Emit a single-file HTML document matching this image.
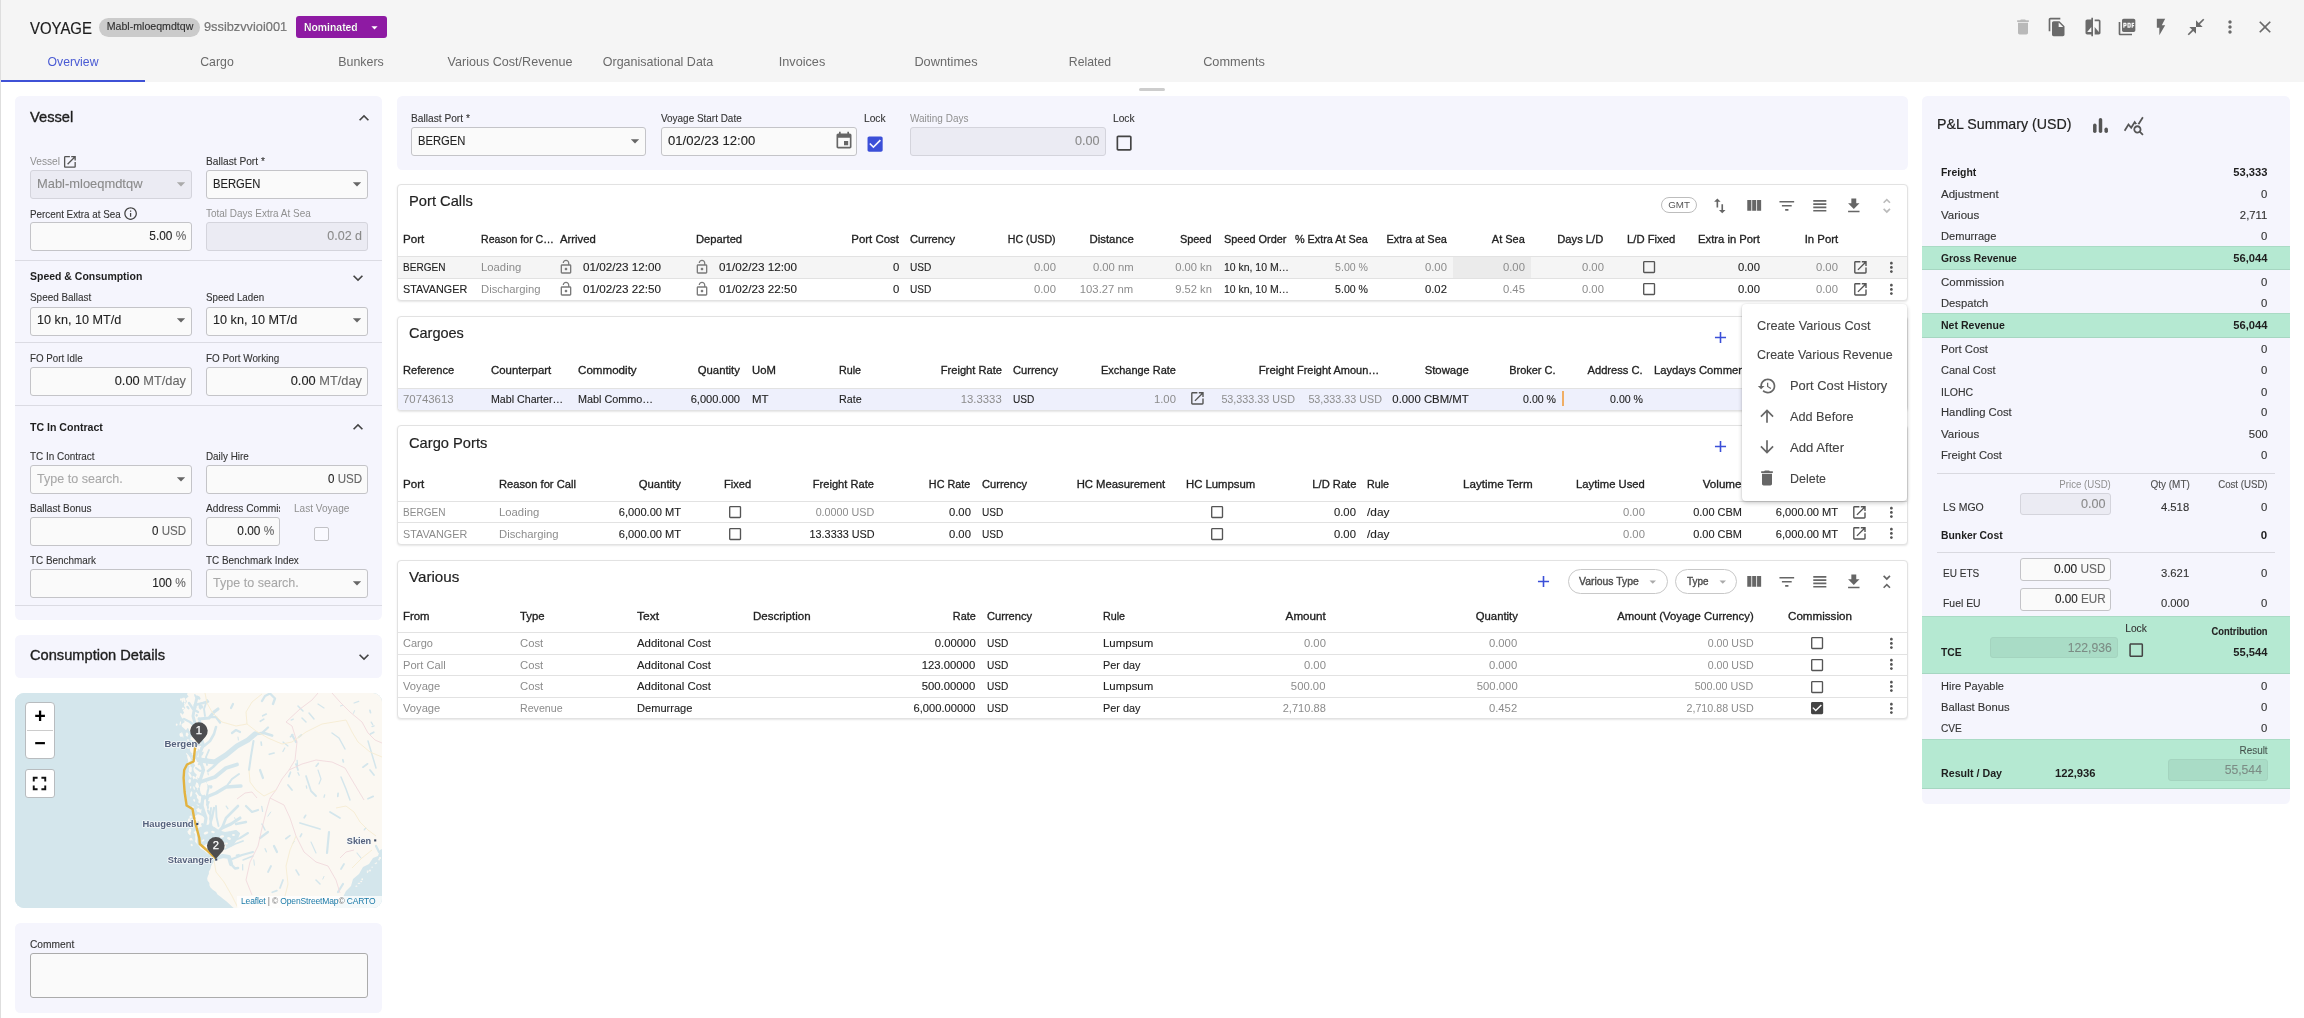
<!DOCTYPE html>
<html lang="en"><head><meta charset="utf-8"><title>Voyage</title>
<style>
html,body{margin:0;padding:0;background:#fff;}
body{width:2304px;height:1018px;overflow:hidden;font-family:"Liberation Sans",sans-serif;color:#222;}
#root{position:relative;width:2304px;height:1018px;overflow:hidden;background:#fff;}
.b,.t,.i,.in,.card,.chip{position:absolute;box-sizing:border-box;}
.t{white-space:nowrap;line-height:20px;height:20px;}
.i{display:block;}
/* text classes */
.c{font-size:11.25px;color:#222;-webkit-text-stroke:.12px #222;}
.g{color:#8c8c8c;-webkit-text-stroke:0;}
.h{font-size:11.25px;color:#222;-webkit-text-stroke:.32px #222;}
.l{font-size:10.1px;color:#333;-webkit-text-stroke:.1px #333;}
.lg{color:#909090;-webkit-text-stroke:0;}
.hd{font-size:14.8px;color:#222;-webkit-text-stroke:.18px #222;}
.hdb{font-size:14.4px;color:#1e1e1e;-webkit-text-stroke:.36px #1e1e1e;}
.sh{font-size:11.25px;color:#1e1e1e;font-weight:bold;}
.tab{font-size:12.6px;color:#6a6a6a;}
.p{font-size:11.25px;color:#333;-webkit-text-stroke:.12px #333;}
.pb{font-size:11.25px;color:#1e1e1e;font-weight:bold;}
.m{font-size:12.8px;color:#444;-webkit-text-stroke:.1px #444;}
/* inputs */
.in{border:1px solid #c4c4c8;border-radius:3px;background:#fafafa;display:flex;align-items:center;padding:0 5px 1.6px 6px;font-size:12.4px;color:#222;overflow:hidden;white-space:nowrap;}
.in.sm{padding-bottom:0;}
.in.cm{border-color:#ababab;}
.in.dis{background:#ebebf3;color:#8a8a8a;border-color:#d4d4dc;}
.in .iv{display:block;-webkit-text-stroke:.1px currentColor;}
.in .ph{color:#a8a8a8;}
.in .sf{color:#666;}
.in.dis .sf{color:#8a8a8a;}
.in .dd{margin-left:auto;flex:none;margin-right:-5px;}
.card{background:#fff;border:1px solid #e2e2e2;border-radius:4px;box-shadow:0 1px 2px rgba(0,0,0,.10);}
.panel{background:#f5f5fd;border-radius:5.4px;}
.chip{border:1px solid #c8c8c8;border-radius:14px;background:#fff;display:flex;align-items:center;font-size:11px;color:#444;}

.ov{position:absolute;left:0;top:0;width:2304px;height:1018px;will-change:transform;pointer-events:none;}
.ml{position:absolute;left:0;top:0;width:2304px;height:1018px;}
.in.tx{background:none!important;border-color:transparent!important;}
.in span.dd{display:block;}

</style></head>
<body>
<div id="root">
<div class="b" style="left:0px;top:0px;width:2304px;height:82px;background:#f5f5f5"></div>
<div class="b" style="left:0px;top:0px;width:1px;height:1018px;background:#dedede"></div>
<div class="b" style="left:99px;top:18px;width:101px;height:19px;border-radius:10px;background:#cbcbcb"></div>
<div class="b" style="left:296px;top:16px;width:91px;height:22px;border-radius:3px;background:#8e1aa3"></div>
<svg class="i" style="left:367px;top:19.5px" width="15" height="15" viewBox="0 0 24 24" fill="#fff"><path d="M7 10l5 5 5-5z"/></svg>
<div class="b" style="left:1px;top:79.5px;width:144px;height:2.5px;background:#3f51d6"></div>
<svg class="i" style="left:2013.3px;top:17.1px" width="20" height="20" viewBox="0 0 24 24" fill="#b9b9b9"><path d="M6 19c0 1.1.9 2 2 2h8c1.1 0 2-.9 2-2V7H6v12zM19 4h-3.5l-1-1h-5l-1 1H5v2h14V4z"/></svg>
<svg class="i" style="left:2047.2px;top:17.1px" width="20" height="20" viewBox="0 0 24 24" fill="#6a6a6a"><path d="M16 1H4c-1.1 0-2 .9-2 2v14h2V3h12V1zm-1 4l6 6v10c0 1.1-.9 2-2 2H7.99C6.89 23 6 22.1 6 21l.01-14c0-1.1.89-2 1.99-2h7zm-1 7h5.5L14 6.5V12z"/></svg>
<svg class="i" style="left:2082.6px;top:17.1px" width="20" height="20" viewBox="0 0 24 24" fill="#6a6a6a"><path d="M10 3H5c-1.1 0-2 .9-2 2v14c0 1.1.9 2 2 2h5v2h2V1h-2v2zm0 15H5l5-6v6zm9-15h-5v2h5v13l-5-6v9h5c1.1 0 2-.9 2-2V5c0-1.1-.9-2-2-2z"/></svg>
<svg class="i" style="left:2117px;top:17.1px" width="20" height="20" viewBox="0 0 24 24" fill="#6a6a6a"><path d="M20 2H8c-1.1 0-2 .9-2 2v12c0 1.1.9 2 2 2h12c1.1 0 2-.9 2-2V4c0-1.1-.9-2-2-2zm-8.5 7.5c0 .83-.67 1.5-1.5 1.5H9v2H7.5V7H10c.83 0 1.5.67 1.5 1.5v1zm5 2c0 .83-.67 1.5-1.5 1.5h-2.5V7H15c.83 0 1.5.67 1.5 1.5v3zm4-3H19v1h1.5V11H19v2h-1.5V7h3v1.5zM9 9.5h1v-1H9v1zM4 6H2v14c0 1.1.9 2 2 2h14v-2H4V6zm10 5.5h1v-3h-1v3z"/></svg>
<svg class="i" style="left:2150.6px;top:17.1px" width="20" height="20" viewBox="0 0 24 24" fill="#6a6a6a"><path d="M7 2v11h3v9l7-12h-4l4-8z"/></svg>
<svg class="i" style="left:2186px;top:17.1px" width="20" height="20" viewBox="0 0 24 24" fill="#6a6a6a"><path d="M22 3.41L16.71 8.7 20 12h-8V4l3.29 3.29L20.59 2 22 3.41zM3.41 22l5.29-5.29L12 20v-8H4l3.29 3.29L2 20.59 3.41 22z"/></svg>
<svg class="i" style="left:2220px;top:17.1px" width="20" height="20" viewBox="0 0 24 24" fill="#6a6a6a"><path d="M12 8c1.1 0 2-.9 2-2s-.9-2-2-2-2 .9-2 2 .9 2 2 2zm0 2c-1.1 0-2 .9-2 2s.9 2 2 2 2-.9 2-2-.9-2-2-2zm0 6c-1.1 0-2 .9-2 2s.9 2 2 2 2-.9 2-2-.9-2-2-2z"/></svg>
<svg class="i" style="left:2255.2px;top:17.1px" width="20" height="20" viewBox="0 0 24 24" fill="#6a6a6a"><path d="M19 6.41L17.59 5 12 10.59 6.41 5 5 6.41 10.59 12 5 17.59 6.41 19 12 13.41 17.59 19 19 17.59 13.41 12z"/></svg>
<div class="b" style="left:1139px;top:87.5px;width:26px;height:3px;background:#cdcdcd;border-radius:2px"></div>
<div class="b panel" style="left:15.4px;top:96px;width:367px;height:524px;"></div>
<svg class="i" style="left:354px;top:107.5px" width="20" height="20" viewBox="0 0 24 24" fill="#444"><path d="M12 8l-6 6 1.41 1.41L12 10.83l4.59 4.58L18 14z"/></svg>
<svg class="i" style="left:62px;top:153.7px" width="15.8" height="15.8" viewBox="0 0 24 24" fill="#555"><path d="M19 19H5V5h7V3H5c-1.11 0-2 .9-2 2v14c0 1.1.89 2 2 2h14c1.1 0 2-.9 2-2v-7h-2v7zM14 3v2h3.59l-9.83 9.83 1.41 1.41L19 6.41V10h2V3h-7z"/></svg>
<div class="in dis" style="left:30px;top:170px;width:162px;height:29px;font-size:12.6px"><svg class="dd" width="20" height="20" viewBox="0 0 24 24" fill="#aaa"><path d="M7 10l5 5 5-5z"/></svg></div>
<div class="in" style="left:206px;top:170px;width:162px;height:29px;font-size:12.6px"><svg class="dd" width="20" height="20" viewBox="0 0 24 24" fill="#666"><path d="M7 10l5 5 5-5z"/></svg></div>
<svg class="i" style="left:122.9px;top:206.4px" width="15.2" height="15.2" viewBox="0 0 24 24" fill="#444"><path d="M11 7h2v2h-2zm0 4h2v6h-2zm1-9C6.48 2 2 6.48 2 12s4.48 10 10 10 10-4.48 10-10S17.52 2 12 2zm0 18c-4.41 0-8-3.59-8-8s3.59-8 8-8 8 3.59 8 8-3.59 8-8 8z"/></svg>
<div class="in" style="left:30px;top:222px;width:162px;height:29px;font-size:12.6px"></div>
<div class="in dis" style="left:206px;top:222px;width:162px;height:29px;font-size:12.6px"></div>
<div class="b" style="left:15.4px;top:260px;width:367px;height:1px;background:#dbdbe3"></div>
<svg class="i" style="left:347.5px;top:267.5px" width="20" height="20" viewBox="0 0 24 24" fill="#444"><path d="M16.59 8.59L12 13.17 7.41 8.59 6 10l6 6 6-6z"/></svg>
<div class="in" style="left:30px;top:307px;width:162px;height:28.5px;font-size:12.6px"><svg class="dd" width="20" height="20" viewBox="0 0 24 24" fill="#666"><path d="M7 10l5 5 5-5z"/></svg></div>
<div class="in" style="left:206px;top:307px;width:162px;height:28.5px;font-size:12.6px"><svg class="dd" width="20" height="20" viewBox="0 0 24 24" fill="#666"><path d="M7 10l5 5 5-5z"/></svg></div>
<div class="b" style="left:15.4px;top:342px;width:367px;height:1px;background:#dbdbe3"></div>
<div class="in" style="left:30px;top:367px;width:162px;height:29px;font-size:12.6px"></div>
<div class="in" style="left:206px;top:367px;width:162px;height:29px;font-size:12.6px"></div>
<div class="b" style="left:15.4px;top:404.5px;width:367px;height:1px;background:#dbdbe3"></div>
<svg class="i" style="left:347.5px;top:417px" width="20" height="20" viewBox="0 0 24 24" fill="#444"><path d="M12 8l-6 6 1.41 1.41L12 10.83l4.59 4.58L18 14z"/></svg>
<div class="in" style="left:30px;top:465px;width:162px;height:29px;font-size:12.6px"><svg class="dd" width="20" height="20" viewBox="0 0 24 24" fill="#666"><path d="M7 10l5 5 5-5z"/></svg></div>
<div class="in" style="left:206px;top:465px;width:162px;height:29px;font-size:12.6px"></div>
<div class="in" style="left:30px;top:517px;width:162px;height:29px;font-size:12.6px"></div>
<div class="in" style="left:206px;top:517px;width:74px;height:29px;font-size:12.6px"></div>
<div class="b" style="left:314.3px;top:527px;width:14.4px;height:14px;border:1.6px solid #c2c2c6;border-radius:2px;background:#fafaff"></div>
<div class="in" style="left:30px;top:569px;width:162px;height:29px;font-size:12.6px"></div>
<div class="in" style="left:206px;top:569px;width:162px;height:29px;font-size:12.6px"><svg class="dd" width="20" height="20" viewBox="0 0 24 24" fill="#666"><path d="M7 10l5 5 5-5z"/></svg></div>
<div class="b" style="left:15.4px;top:605px;width:367px;height:1px;background:#dbdbe3"></div>
<div class="b panel" style="left:15.4px;top:635px;width:367px;height:43px;"></div>
<svg class="i" style="left:354px;top:646.5px" width="20" height="20" viewBox="0 0 24 24" fill="#444"><path d="M16.59 8.59L12 13.17 7.41 8.59 6 10l6 6 6-6z"/></svg>
<div class="b" style="left:15px;top:693px;width:367.4px;height:215px;border-radius:9px;overflow:hidden;background:#d4e6ec"><svg width="368" height="215" viewBox="15 693 368 215" style="display:block">
<rect x="15" y="693" width="368" height="215" fill="#d4e6ec"/>
<path d="M188.2 692.0 L186.9 694.3 L188.6 696.6 L185.5 698.9 L187.0 701.2 L185.8 703.5 L183.9 705.8 L185.4 708.1 L182.9 710.4 L184.2 712.7 L182.1 715.0 L182.0 717.3 L183.2 719.6 L184.8 721.9 L181.5 724.2 L181.9 726.5 L184.5 728.8 L186.7 731.1 L185.8 733.4 L185.8 735.7 L189.1 738.0 L186.4 740.3 L191.5 742.6 L190.4 744.9 L190.3 747.2 L189.9 749.5 L190.5 751.8 L192.5 754.1 L190.2 756.4 L192.8 758.7 L194.0 761.0 L193.8 763.3 L195.3 765.6 L193.4 767.9 L193.6 770.2 L194.5 772.5 L196.8 774.8 L195.7 777.1 L195.2 779.4 L196.4 781.7 L195.8 784.0 L195.1 786.3 L197.3 788.6 L197.0 790.9 L195.2 793.2 L196.9 795.5 L196.9 797.8 L198.7 800.1 L198.2 802.4 L196.5 804.7 L199.8 807.0 L196.2 809.3 L197.2 811.6 L198.2 813.9 L194.9 816.2 L195.8 818.5 L193.4 820.8 L196.0 823.1 L196.2 825.4 L195.2 827.7 L196.4 830.0 L193.7 832.3 L195.5 834.6 L195.2 836.9 L195.4 839.2 L195.0 841.5 L196.9 843.8 L199.1 846.1 L200.5 848.4 L204.3 850.7 L206.9 853.0 L211.2 855.3 L213.0 857.6 L214.6 859.9 L213.5 862.2 L211.7 864.5 L210.9 866.8 L210.4 869.1 L208.9 871.4 L208.9 873.7 L207.9 876.0 L207.2 878.3 L207.5 880.6 L209.4 882.9 L209.4 885.2 L210.5 887.5 L212.8 889.8 L216.1 892.1 L217.5 894.4 L220.6 896.7 L223.3 899.0 L226.3 901.3 L228.8 903.6 L231.4 905.9 L234.0 908.2 L330.0 910.0 L337.0 903.0 L343.0 897.0 L346.0 891.0 L351.0 886.0 L353.0 879.0 L359.0 874.0 L363.0 867.0 L369.0 864.0 L373.0 858.0 L378.0 856.0 L380.0 850.0 L384.0 848.0 L384.0 692.0Z" fill="#fbf8f2"/>
<ellipse cx="189.0" cy="758.3" rx="1.4" ry="3.1" transform="rotate(-25 189.0 758.3)" fill="#fbf8f2"/>
<ellipse cx="183.1" cy="708.4" rx="1.2" ry="1.0" transform="rotate(10 183.1 708.4)" fill="#fbf8f2"/>
<ellipse cx="180.3" cy="723.4" rx="0.6" ry="2.2" transform="rotate(10 180.3 723.4)" fill="#fbf8f2"/>
<ellipse cx="189.7" cy="781.0" rx="1.2" ry="2.1" transform="rotate(10 189.7 781.0)" fill="#fbf8f2"/>
<ellipse cx="191.2" cy="794.2" rx="1.0" ry="2.9" transform="rotate(10 191.2 794.2)" fill="#fbf8f2"/>
<ellipse cx="187.5" cy="754.9" rx="0.6" ry="2.4" transform="rotate(-35 187.5 754.9)" fill="#fbf8f2"/>
<ellipse cx="176.7" cy="724.6" rx="0.9" ry="1.2" transform="rotate(10 176.7 724.6)" fill="#fbf8f2"/>
<ellipse cx="184.8" cy="703.9" rx="0.7" ry="1.2" transform="rotate(-15 184.8 703.9)" fill="#fbf8f2"/>
<ellipse cx="194.1" cy="788.1" rx="0.7" ry="1.8" transform="rotate(-15 194.1 788.1)" fill="#fbf8f2"/>
<ellipse cx="190.5" cy="839.3" rx="1.0" ry="1.3" transform="rotate(0 190.5 839.3)" fill="#fbf8f2"/>
<ellipse cx="191.7" cy="845.0" rx="1.0" ry="1.2" transform="rotate(-35 191.7 845.0)" fill="#fbf8f2"/>
<ellipse cx="192.6" cy="808.5" rx="1.0" ry="2.5" transform="rotate(10 192.6 808.5)" fill="#fbf8f2"/>
<ellipse cx="181.0" cy="699.5" rx="1.0" ry="1.3" transform="rotate(10 181.0 699.5)" fill="#fbf8f2"/>
<ellipse cx="189.2" cy="833.1" rx="0.8" ry="2.4" transform="rotate(-35 189.2 833.1)" fill="#fbf8f2"/>
<ellipse cx="194.2" cy="800.4" rx="0.9" ry="1.4" transform="rotate(-25 194.2 800.4)" fill="#fbf8f2"/>
<ellipse cx="190.6" cy="775.9" rx="0.8" ry="1.5" transform="rotate(-25 190.6 775.9)" fill="#fbf8f2"/>
<ellipse cx="190.7" cy="816.9" rx="1.2" ry="1.5" transform="rotate(10 190.7 816.9)" fill="#fbf8f2"/>
<ellipse cx="190.3" cy="769.9" rx="1.5" ry="2.7" transform="rotate(0 190.3 769.9)" fill="#fbf8f2"/>
<ellipse cx="181.0" cy="734.9" rx="1.5" ry="2.0" transform="rotate(-15 181.0 734.9)" fill="#fbf8f2"/>
<ellipse cx="191.7" cy="839.3" rx="0.7" ry="1.5" transform="rotate(-25 191.7 839.3)" fill="#fbf8f2"/>
<ellipse cx="188.0" cy="746.7" rx="1.5" ry="2.3" transform="rotate(-35 188.0 746.7)" fill="#fbf8f2"/>
<ellipse cx="190.5" cy="767.9" rx="1.3" ry="1.2" transform="rotate(-35 190.5 767.9)" fill="#fbf8f2"/>
<ellipse cx="189.1" cy="832.5" rx="1.3" ry="2.1" transform="rotate(-25 189.1 832.5)" fill="#fbf8f2"/>
<ellipse cx="188.8" cy="761.1" rx="0.6" ry="3.1" transform="rotate(0 188.8 761.1)" fill="#fbf8f2"/>
<ellipse cx="189.8" cy="765.5" rx="0.6" ry="1.3" transform="rotate(-25 189.8 765.5)" fill="#fbf8f2"/>
<ellipse cx="182.7" cy="700.1" rx="1.0" ry="2.4" transform="rotate(10 182.7 700.1)" fill="#fbf8f2"/>
<ellipse cx="189.1" cy="820.0" rx="1.2" ry="1.8" transform="rotate(10 189.1 820.0)" fill="#fbf8f2"/>
<ellipse cx="194.4" cy="778.2" rx="1.3" ry="2.6" transform="rotate(-35 194.4 778.2)" fill="#fbf8f2"/>
<ellipse cx="189.8" cy="775.0" rx="0.9" ry="2.9" transform="rotate(-25 189.8 775.0)" fill="#fbf8f2"/>
<ellipse cx="184.5" cy="700.2" rx="1.0" ry="2.7" transform="rotate(-15 184.5 700.2)" fill="#fbf8f2"/>
<ellipse cx="182.4" cy="734.9" rx="0.6" ry="3.0" transform="rotate(-15 182.4 734.9)" fill="#fbf8f2"/>
<ellipse cx="189.9" cy="830.7" rx="1.3" ry="2.1" transform="rotate(10 189.9 830.7)" fill="#fbf8f2"/>
<ellipse cx="181.7" cy="715.6" rx="1.0" ry="2.9" transform="rotate(-25 181.7 715.6)" fill="#fbf8f2"/>
<ellipse cx="190.6" cy="787.3" rx="0.6" ry="1.3" transform="rotate(10 190.6 787.3)" fill="#fbf8f2"/>
<ellipse cx="206.2" cy="790.3" rx="0.9" ry="2.3" transform="rotate(15 206.2 790.3)" fill="#d4e6ec"/>
<ellipse cx="206.0" cy="758.7" rx="1.4" ry="1.3" transform="rotate(-25 206.0 758.7)" fill="#d4e6ec"/>
<ellipse cx="198.5" cy="732.0" rx="1.1" ry="2.4" transform="rotate(-40 198.5 732.0)" fill="#d4e6ec"/>
<ellipse cx="202.1" cy="753.6" rx="1.1" ry="2.3" transform="rotate(30 202.1 753.6)" fill="#d4e6ec"/>
<ellipse cx="194.4" cy="732.0" rx="1.3" ry="2.3" transform="rotate(-25 194.4 732.0)" fill="#d4e6ec"/>
<ellipse cx="211.1" cy="786.9" rx="1.4" ry="1.8" transform="rotate(15 211.1 786.9)" fill="#d4e6ec"/>
<ellipse cx="202.1" cy="812.1" rx="1.0" ry="2.1" transform="rotate(0 202.1 812.1)" fill="#d4e6ec"/>
<ellipse cx="193.8" cy="753.5" rx="0.8" ry="1.4" transform="rotate(30 193.8 753.5)" fill="#d4e6ec"/>
<ellipse cx="189.5" cy="735.4" rx="1.3" ry="3.3" transform="rotate(30 189.5 735.4)" fill="#d4e6ec"/>
<ellipse cx="199.7" cy="781.8" rx="1.4" ry="3.3" transform="rotate(-25 199.7 781.8)" fill="#d4e6ec"/>
<ellipse cx="199.3" cy="793.1" rx="1.4" ry="1.6" transform="rotate(30 199.3 793.1)" fill="#d4e6ec"/>
<ellipse cx="201.4" cy="804.2" rx="1.0" ry="2.3" transform="rotate(-10 201.4 804.2)" fill="#d4e6ec"/>
<ellipse cx="198.5" cy="750.8" rx="0.7" ry="2.0" transform="rotate(-10 198.5 750.8)" fill="#d4e6ec"/>
<ellipse cx="203.6" cy="768.0" rx="0.6" ry="1.9" transform="rotate(15 203.6 768.0)" fill="#d4e6ec"/>
<ellipse cx="202.2" cy="734.4" rx="0.7" ry="3.2" transform="rotate(-25 202.2 734.4)" fill="#d4e6ec"/>
<ellipse cx="198.4" cy="822.3" rx="0.8" ry="1.3" transform="rotate(-25 198.4 822.3)" fill="#d4e6ec"/>
<ellipse cx="188.2" cy="731.2" rx="1.0" ry="3.2" transform="rotate(-10 188.2 731.2)" fill="#d4e6ec"/>
<ellipse cx="201.5" cy="748.8" rx="1.1" ry="2.3" transform="rotate(-10 201.5 748.8)" fill="#d4e6ec"/>
<ellipse cx="187.9" cy="707.6" rx="1.2" ry="2.1" transform="rotate(-40 187.9 707.6)" fill="#d4e6ec"/>
<ellipse cx="186.4" cy="731.0" rx="0.7" ry="1.8" transform="rotate(15 186.4 731.0)" fill="#d4e6ec"/>
<ellipse cx="200.3" cy="807.3" rx="1.4" ry="2.2" transform="rotate(-10 200.3 807.3)" fill="#d4e6ec"/>
<ellipse cx="203.1" cy="825.3" rx="1.4" ry="2.6" transform="rotate(-40 203.1 825.3)" fill="#d4e6ec"/>
<ellipse cx="200.0" cy="764.5" rx="0.7" ry="1.6" transform="rotate(-40 200.0 764.5)" fill="#d4e6ec"/>
<ellipse cx="199.5" cy="719.5" rx="1.2" ry="2.4" transform="rotate(-25 199.5 719.5)" fill="#d4e6ec"/>
<ellipse cx="194.8" cy="733.7" rx="0.8" ry="2.0" transform="rotate(-40 194.8 733.7)" fill="#d4e6ec"/>
<ellipse cx="197.2" cy="825.3" rx="0.6" ry="2.3" transform="rotate(-25 197.2 825.3)" fill="#d4e6ec"/>
<ellipse cx="199.4" cy="762.9" rx="1.0" ry="2.6" transform="rotate(30 199.4 762.9)" fill="#d4e6ec"/>
<ellipse cx="200.5" cy="752.2" rx="1.4" ry="2.1" transform="rotate(15 200.5 752.2)" fill="#d4e6ec"/>
<ellipse cx="191.2" cy="736.0" rx="0.8" ry="1.6" transform="rotate(30 191.2 736.0)" fill="#d4e6ec"/>
<ellipse cx="199.7" cy="790.7" rx="1.5" ry="3.4" transform="rotate(-25 199.7 790.7)" fill="#d4e6ec"/>
<ellipse cx="198.8" cy="697.9" rx="1.4" ry="2.1" transform="rotate(-40 198.8 697.9)" fill="#d4e6ec"/>
<ellipse cx="200.1" cy="707.0" rx="1.4" ry="2.7" transform="rotate(-10 200.1 707.0)" fill="#d4e6ec"/>
<ellipse cx="208.1" cy="773.8" rx="0.6" ry="1.6" transform="rotate(-10 208.1 773.8)" fill="#d4e6ec"/>
<ellipse cx="196.7" cy="754.0" rx="1.5" ry="3.3" transform="rotate(15 196.7 754.0)" fill="#d4e6ec"/>
<ellipse cx="189.1" cy="738.1" rx="1.4" ry="1.7" transform="rotate(-25 189.1 738.1)" fill="#d4e6ec"/>
<ellipse cx="195.5" cy="696.1" rx="1.0" ry="2.3" transform="rotate(-25 195.5 696.1)" fill="#d4e6ec"/>
<ellipse cx="197.3" cy="728.3" rx="0.7" ry="3.0" transform="rotate(-25 197.3 728.3)" fill="#d4e6ec"/>
<ellipse cx="193.9" cy="747.9" rx="0.6" ry="1.9" transform="rotate(-25 193.9 747.9)" fill="#d4e6ec"/>
<ellipse cx="201.9" cy="707.0" rx="1.4" ry="1.5" transform="rotate(30 201.9 707.0)" fill="#d4e6ec"/>
<ellipse cx="207.5" cy="797.9" rx="1.3" ry="2.8" transform="rotate(0 207.5 797.9)" fill="#d4e6ec"/>
<ellipse cx="196.7" cy="715.4" rx="1.2" ry="1.3" transform="rotate(30 196.7 715.4)" fill="#d4e6ec"/>
<ellipse cx="208.7" cy="812.0" rx="1.3" ry="3.0" transform="rotate(-25 208.7 812.0)" fill="#d4e6ec"/>
<ellipse cx="210.1" cy="814.3" rx="1.1" ry="3.0" transform="rotate(-40 210.1 814.3)" fill="#d4e6ec"/>
<ellipse cx="207.9" cy="803.4" rx="1.4" ry="2.7" transform="rotate(30 207.9 803.4)" fill="#d4e6ec"/>
<ellipse cx="198.8" cy="779.6" rx="0.6" ry="2.6" transform="rotate(-40 198.8 779.6)" fill="#d4e6ec"/>
<ellipse cx="199.8" cy="745.0" rx="0.6" ry="1.2" transform="rotate(15 199.8 745.0)" fill="#d4e6ec"/>
<ellipse cx="205.1" cy="784.5" rx="0.6" ry="3.0" transform="rotate(30 205.1 784.5)" fill="#d4e6ec"/>
<ellipse cx="211.6" cy="817.2" rx="0.7" ry="2.4" transform="rotate(30 211.6 817.2)" fill="#d4e6ec"/>
<ellipse cx="201.6" cy="791.8" rx="0.7" ry="1.8" transform="rotate(30 201.6 791.8)" fill="#d4e6ec"/>
<ellipse cx="201.5" cy="794.3" rx="1.2" ry="2.2" transform="rotate(0 201.5 794.3)" fill="#d4e6ec"/>
<ellipse cx="201.4" cy="706.0" rx="0.9" ry="1.3" transform="rotate(30 201.4 706.0)" fill="#d4e6ec"/>
<ellipse cx="198.7" cy="779.6" rx="0.7" ry="1.8" transform="rotate(30 198.7 779.6)" fill="#d4e6ec"/>
<ellipse cx="207.1" cy="786.1" rx="0.7" ry="2.3" transform="rotate(0 207.1 786.1)" fill="#d4e6ec"/>
<ellipse cx="196.6" cy="730.9" rx="1.2" ry="2.7" transform="rotate(-10 196.6 730.9)" fill="#d4e6ec"/>
<ellipse cx="201.9" cy="788.2" rx="1.0" ry="2.9" transform="rotate(15 201.9 788.2)" fill="#d4e6ec"/>
<ellipse cx="200.0" cy="721.9" rx="1.4" ry="1.2" transform="rotate(0 200.0 721.9)" fill="#d4e6ec"/>
<ellipse cx="195.2" cy="705.9" rx="1.5" ry="3.4" transform="rotate(0 195.2 705.9)" fill="#d4e6ec"/>
<ellipse cx="199.4" cy="723.3" rx="0.8" ry="2.5" transform="rotate(-25 199.4 723.3)" fill="#d4e6ec"/>
<ellipse cx="201.9" cy="793.2" rx="0.9" ry="2.5" transform="rotate(30 201.9 793.2)" fill="#d4e6ec"/>
<ellipse cx="209.1" cy="762.1" rx="1.2" ry="1.7" transform="rotate(0 209.1 762.1)" fill="#d4e6ec"/>
<path d="M197.0 697.0 L194.5 708.0 L193.0 716.0 L196.0 727.0 L201.0 738.0 L203.5 745.0 L200.0 752.0 L200.0 760.0" fill="none" stroke="#d4e6ec" stroke-width="2.97" stroke-linecap="round" stroke-linejoin="round"/>
<path d="M200.0 760.0 L203.5 770.0 L199.5 782.0 L203.0 795.0 L202.0 806.0 L206.0 818.0 L204.0 830.0" fill="none" stroke="#d4e6ec" stroke-width="3.24" stroke-linecap="round" stroke-linejoin="round"/>
<path d="M189.0 703.0 L193.0 709.0 L198.0 712.0" fill="none" stroke="#d4e6ec" stroke-width="2.43" stroke-linecap="round" stroke-linejoin="round"/>
<path d="M184.0 719.0 L190.0 722.0 L196.0 727.0" fill="none" stroke="#d4e6ec" stroke-width="2.43" stroke-linecap="round" stroke-linejoin="round"/>
<path d="M186.0 731.0 L192.0 733.0 L198.0 731.0" fill="none" stroke="#d4e6ec" stroke-width="2.16" stroke-linecap="round" stroke-linejoin="round"/>
<path d="M190.0 741.0 L196.0 744.0 L203.0 745.0" fill="none" stroke="#d4e6ec" stroke-width="2.7" stroke-linecap="round" stroke-linejoin="round"/>
<path d="M191.0 756.0 L196.0 758.0 L200.0 760.0" fill="none" stroke="#d4e6ec" stroke-width="2.7" stroke-linecap="round" stroke-linejoin="round"/>
<path d="M196.0 768.0 L200.0 771.0 L204.0 770.0" fill="none" stroke="#d4e6ec" stroke-width="2.16" stroke-linecap="round" stroke-linejoin="round"/>
<path d="M195.0 780.0 L199.0 782.0" fill="none" stroke="#d4e6ec" stroke-width="2.97" stroke-linecap="round" stroke-linejoin="round"/>
<path d="M197.0 791.0 L200.0 795.0 L204.0 796.0" fill="none" stroke="#d4e6ec" stroke-width="2.16" stroke-linecap="round" stroke-linejoin="round"/>
<path d="M197.0 803.0 L202.0 806.0" fill="none" stroke="#d4e6ec" stroke-width="2.43" stroke-linecap="round" stroke-linejoin="round"/>
<path d="M198.0 813.0 L203.0 815.0 L206.0 818.0" fill="none" stroke="#d4e6ec" stroke-width="2.16" stroke-linecap="round" stroke-linejoin="round"/>
<path d="M207.0 700.0 L204.0 709.0 L205.0 716.0" fill="none" stroke="#d4e6ec" stroke-width="1.89" stroke-linecap="round" stroke-linejoin="round"/>
<path d="M209.0 750.0 L206.0 757.0 L207.0 765.0" fill="none" stroke="#d4e6ec" stroke-width="1.89" stroke-linecap="round" stroke-linejoin="round"/>
<path d="M209.0 786.0 L206.5 797.0 L208.0 808.0" fill="none" stroke="#d4e6ec" stroke-width="2.03" stroke-linecap="round" stroke-linejoin="round"/>
<path d="M211.0 808.0 L210.0 819.0 L212.0 828.0" fill="none" stroke="#d4e6ec" stroke-width="1.89" stroke-linecap="round" stroke-linejoin="round"/>
<path d="M216.0 806.0 L216.5 817.0 L218.5 826.0" fill="none" stroke="#d4e6ec" stroke-width="1.89" stroke-linecap="round" stroke-linejoin="round"/>
<ellipse cx="203.6" cy="788" rx="3.6" ry="7.2" transform="rotate(6 203.6 788)" fill="#fbf8f2"/>
<ellipse cx="361.2" cy="881.5" rx="1.0" ry="0.7" fill="#fbf8f2"/>
<ellipse cx="375.3" cy="863.5" rx="0.6" ry="0.7" fill="#fbf8f2"/>
<ellipse cx="359.0" cy="883.3" rx="1.3" ry="0.6" fill="#fbf8f2"/>
<ellipse cx="347.7" cy="898.2" rx="0.6" ry="0.7" fill="#fbf8f2"/>
<ellipse cx="380.0" cy="858.1" rx="1.1" ry="1.0" fill="#fbf8f2"/>
<ellipse cx="356.4" cy="886.2" rx="1.0" ry="0.6" fill="#fbf8f2"/>
<ellipse cx="385.2" cy="851.4" rx="1.1" ry="1.0" fill="#fbf8f2"/>
<ellipse cx="362.2" cy="879.3" rx="0.8" ry="1.0" fill="#fbf8f2"/>
<ellipse cx="367.8" cy="871.1" rx="1.2" ry="0.7" fill="#fbf8f2"/>
<ellipse cx="370.0" cy="870.5" rx="0.9" ry="1.0" fill="#fbf8f2"/>
<ellipse cx="367.5" cy="872.3" rx="0.7" ry="0.7" fill="#fbf8f2"/>
<ellipse cx="376.5" cy="863.0" rx="0.7" ry="0.8" fill="#fbf8f2"/>
<ellipse cx="372.1" cy="867.2" rx="0.6" ry="0.8" fill="#fbf8f2"/>
<ellipse cx="379.1" cy="859.6" rx="0.8" ry="1.0" fill="#fbf8f2"/>
<path d="M197.0 829.0 L203.0 826.5 L209.0 825.0 L214.0 827.5 L219.0 831.0 L225.0 832.5 L231.0 831.5 L236.0 830.5 L239.5 833.5 L237.5 838.0 L234.5 842.5 L231.0 846.0 L227.0 847.0 L224.5 842.0 L220.5 838.5 L216.0 837.0 L211.5 839.5 L207.0 843.0 L202.0 846.0 L198.0 844.0 L197.5 837.0Z" fill="#d4e6ec" stroke="#d4e6ec" stroke-width="1.2" stroke-linejoin="round"/>
<ellipse cx="206" cy="833" rx="2.4" ry="1.3" transform="rotate(-20 206 833)" fill="#fbf8f2"/>
<ellipse cx="213" cy="832" rx="1.8" ry="1.1" transform="rotate(10 213 832)" fill="#fbf8f2"/>
<ellipse cx="222" cy="836.5" rx="2.2" ry="1.2" transform="rotate(-15 222 836.5)" fill="#fbf8f2"/>
<ellipse cx="229" cy="838.5" rx="2.0" ry="1.3" transform="rotate(25 229 838.5)" fill="#fbf8f2"/>
<ellipse cx="233.5" cy="835" rx="1.5" ry="1.0" transform="rotate(0 233.5 835)" fill="#fbf8f2"/>
<ellipse cx="203" cy="840.5" rx="1.6" ry="1.0" transform="rotate(-30 203 840.5)" fill="#fbf8f2"/>
<ellipse cx="226.5" cy="843.5" rx="1.4" ry="0.9" transform="rotate(0 226.5 843.5)" fill="#fbf8f2"/>
<path d="M199.0 760.0 L215.0 762.0 L226.0 755.0 L237.0 746.0 L248.0 740.0 L255.0 734.0" fill="none" stroke="#d4e6ec" stroke-width="5.2" stroke-linecap="round" stroke-linejoin="round"/>
<path d="M255.0 734.0 L264.0 733.0 L272.0 735.5" fill="none" stroke="#d4e6ec" stroke-width="2.86" stroke-linecap="round" stroke-linejoin="round"/>
<path d="M262.0 733.0 L268.0 727.5" fill="none" stroke="#d4e6ec" stroke-width="2.34" stroke-linecap="round" stroke-linejoin="round"/>
<path d="M253.5 741.0 L251.0 756.0 L249.0 770.0" fill="none" stroke="#d4e6ec" stroke-width="2.08" stroke-linecap="round" stroke-linejoin="round"/>
<path d="M200.0 782.0 L215.0 777.0 L226.0 768.0 L237.0 764.5" fill="none" stroke="#d4e6ec" stroke-width="3.9" stroke-linecap="round" stroke-linejoin="round"/>
<path d="M204.0 798.0 L216.0 793.0 L226.0 787.0 L241.0 786.0" fill="none" stroke="#d4e6ec" stroke-width="3.38" stroke-linecap="round" stroke-linejoin="round"/>
<path d="M226.0 787.0 L232.0 779.0 L239.0 774.0" fill="none" stroke="#d4e6ec" stroke-width="2.08" stroke-linecap="round" stroke-linejoin="round"/>
<path d="M199.0 719.0 L209.0 718.0 L214.0 712.0 L218.0 709.0" fill="none" stroke="#d4e6ec" stroke-width="3.12" stroke-linecap="round" stroke-linejoin="round"/>
<path d="M211.0 717.0 L216.0 717.0 L220.0 722.5" fill="none" stroke="#d4e6ec" stroke-width="2.34" stroke-linecap="round" stroke-linejoin="round"/>
<path d="M195.0 705.0 L203.0 703.0 L208.0 701.5" fill="none" stroke="#d4e6ec" stroke-width="2.6" stroke-linecap="round" stroke-linejoin="round"/>
<path d="M262.0 701.0 L265.0 696.0 L270.0 693.5 L275.0 698.5 L273.0 704.0" fill="none" stroke="#d4e6ec" stroke-width="2.34" stroke-linecap="round" stroke-linejoin="round"/>
<path d="M204.0 746.0 L210.0 741.0 L214.0 734.0 L216.0 727.0" fill="none" stroke="#d4e6ec" stroke-width="2.6" stroke-linecap="round" stroke-linejoin="round"/>
<path d="M208.0 771.0 L213.0 767.0 L219.0 761.0" fill="none" stroke="#d4e6ec" stroke-width="2.6" stroke-linecap="round" stroke-linejoin="round"/>
<path d="M214.0 836.0 L222.0 828.0 L231.0 824.0 L240.0 818.0" fill="none" stroke="#d4e6ec" stroke-width="3.12" stroke-linecap="round" stroke-linejoin="round"/>
<path d="M222.0 828.0 L226.0 818.0 L232.0 812.0 L238.0 806.0" fill="none" stroke="#d4e6ec" stroke-width="2.6" stroke-linecap="round" stroke-linejoin="round"/>
<path d="M209.0 828.0 L212.0 818.0 L214.0 808.0" fill="none" stroke="#d4e6ec" stroke-width="2.34" stroke-linecap="round" stroke-linejoin="round"/>
<path d="M230.0 842.0 L240.0 838.0 L248.0 833.0" fill="none" stroke="#d4e6ec" stroke-width="2.08" stroke-linecap="round" stroke-linejoin="round"/>
<path d="M236.0 824.0 L246.0 822.0" fill="none" stroke="#d4e6ec" stroke-width="2.34" stroke-linecap="round" stroke-linejoin="round"/>
<path d="M216.0 858.0 L223.0 856.0 L229.0 857.0 L231.0 864.0" fill="none" stroke="#d4e6ec" stroke-width="4.16" stroke-linecap="round" stroke-linejoin="round"/>
<path d="M231.0 864.0 L235.0 868.5 L238.0 868.0" fill="none" stroke="#d4e6ec" stroke-width="2.6" stroke-linecap="round" stroke-linejoin="round"/>
<path d="M231.0 859.5 L242.0 855.0 L253.0 852.0" fill="none" stroke="#d4e6ec" stroke-width="2.08" stroke-linecap="round" stroke-linejoin="round"/>
<path d="M225.0 849.0 L235.0 844.0 L243.0 841.0" fill="none" stroke="#d4e6ec" stroke-width="1.82" stroke-linecap="round" stroke-linejoin="round"/>
<path d="M292.0 735.0 L296.0 742.0" fill="none" stroke="#d4e6ec" stroke-width="2.2" stroke-linecap="round" stroke-linejoin="round"/>
<path d="M298.0 706.0 L303.0 711.0" fill="none" stroke="#d4e6ec" stroke-width="1.5" stroke-linecap="round" stroke-linejoin="round"/>
<path d="M309.0 713.0 L314.0 719.0" fill="none" stroke="#d4e6ec" stroke-width="1.5" stroke-linecap="round" stroke-linejoin="round"/>
<path d="M302.0 718.0 L306.0 722.0" fill="none" stroke="#d4e6ec" stroke-width="1.5" stroke-linecap="round" stroke-linejoin="round"/>
<path d="M318.0 704.0 L324.0 708.0" fill="none" stroke="#d4e6ec" stroke-width="1.2" stroke-linecap="round" stroke-linejoin="round"/>
<path d="M332.0 733.0 L339.0 738.0 L345.0 749.0" fill="none" stroke="#d4e6ec" stroke-width="1.5" stroke-linecap="round" stroke-linejoin="round"/>
<path d="M296.0 764.0 L298.0 770.0" fill="none" stroke="#d4e6ec" stroke-width="1.8" stroke-linecap="round" stroke-linejoin="round"/>
<path d="M318.0 770.0 L321.0 779.0 L319.0 784.0" fill="none" stroke="#d4e6ec" stroke-width="1.2" stroke-linecap="round" stroke-linejoin="round"/>
<path d="M306.0 776.0 L311.0 791.0 L316.0 796.0" fill="none" stroke="#d4e6ec" stroke-width="1.8" stroke-linecap="round" stroke-linejoin="round"/>
<path d="M341.0 777.0 L346.0 789.0 L350.0 800.0" fill="none" stroke="#d4e6ec" stroke-width="1.5" stroke-linecap="round" stroke-linejoin="round"/>
<path d="M288.0 785.0 L292.0 790.0" fill="none" stroke="#d4e6ec" stroke-width="1.8" stroke-linecap="round" stroke-linejoin="round"/>
<path d="M370.0 770.0 L374.0 775.0" fill="none" stroke="#d4e6ec" stroke-width="1.8" stroke-linecap="round" stroke-linejoin="round"/>
<path d="M368.0 741.0 L376.0 768.0" fill="none" stroke="#d4e6ec" stroke-width="1.5" stroke-linecap="round" stroke-linejoin="round"/>
<path d="M283.0 742.0 L288.0 746.0" fill="none" stroke="#d4e6ec" stroke-width="1.2" stroke-linecap="round" stroke-linejoin="round"/>
<path d="M232.0 733.0 L236.0 730.0 L240.0 732.0" fill="none" stroke="#d4e6ec" stroke-width="2.2" stroke-linecap="round" stroke-linejoin="round"/>
<path d="M231.0 708.0 L233.0 704.0" fill="none" stroke="#d4e6ec" stroke-width="2.2" stroke-linecap="round" stroke-linejoin="round"/>
<path d="M260.0 770.0 L263.0 778.0" fill="none" stroke="#d4e6ec" stroke-width="2.2" stroke-linecap="round" stroke-linejoin="round"/>
<path d="M262.0 824.0 L265.0 830.0" fill="none" stroke="#d4e6ec" stroke-width="1.5" stroke-linecap="round" stroke-linejoin="round"/>
<path d="M274.0 846.0 L277.0 852.0" fill="none" stroke="#d4e6ec" stroke-width="2.2" stroke-linecap="round" stroke-linejoin="round"/>
<path d="M268.0 872.0 L271.0 866.0" fill="none" stroke="#d4e6ec" stroke-width="1.8" stroke-linecap="round" stroke-linejoin="round"/>
<path d="M280.0 888.0 L283.0 880.0" fill="none" stroke="#d4e6ec" stroke-width="1.8" stroke-linecap="round" stroke-linejoin="round"/>
<path d="M311.0 842.0 L316.0 853.0" fill="none" stroke="#d4e6ec" stroke-width="1.2" stroke-linecap="round" stroke-linejoin="round"/>
<path d="M329.0 832.0 L327.0 853.0" fill="none" stroke="#d4e6ec" stroke-width="2.2" stroke-linecap="round" stroke-linejoin="round"/>
<path d="M300.0 823.0 L320.0 829.0" fill="none" stroke="#d4e6ec" stroke-width="1.8" stroke-linecap="round" stroke-linejoin="round"/>
<path d="M330.0 812.0 L340.0 818.0" fill="none" stroke="#d4e6ec" stroke-width="1.8" stroke-linecap="round" stroke-linejoin="round"/>
<path d="M296.0 870.0 L299.0 875.0" fill="none" stroke="#d4e6ec" stroke-width="1.5" stroke-linecap="round" stroke-linejoin="round"/>
<path d="M316.0 880.0 L320.0 884.0" fill="none" stroke="#d4e6ec" stroke-width="1.5" stroke-linecap="round" stroke-linejoin="round"/>
<path d="M357.0 853.0 L361.0 858.0" fill="none" stroke="#d4e6ec" stroke-width="1.2" stroke-linecap="round" stroke-linejoin="round"/>
<path d="M341.0 869.0 L344.0 864.0" fill="none" stroke="#d4e6ec" stroke-width="1.8" stroke-linecap="round" stroke-linejoin="round"/>
<path d="M243.0 860.0 L253.0 856.0" fill="none" stroke="#d4e6ec" stroke-width="1.5" stroke-linecap="round" stroke-linejoin="round"/>
<path d="M260.0 838.0 L268.0 832.0" fill="none" stroke="#d4e6ec" stroke-width="2.2" stroke-linecap="round" stroke-linejoin="round"/>
<path d="M246.0 806.0 L252.0 812.0 L258.0 810.0" fill="none" stroke="#d4e6ec" stroke-width="2.2" stroke-linecap="round" stroke-linejoin="round"/>
<path d="M376.0 846.0 L379.0 852.0" fill="none" stroke="#d4e6ec" stroke-width="2.2" stroke-linecap="round" stroke-linejoin="round"/>
<path d="M338.0 892.0 L343.0 884.0" fill="none" stroke="#d4e6ec" stroke-width="2.2" stroke-linecap="round" stroke-linejoin="round"/>
<path d="M358.7 701.4 L354.1 703.0" fill="none" stroke="#d4e6ec" stroke-width="1.3" stroke-linecap="round"/>
<path d="M373.2 796.4 L367.9 798.7" fill="none" stroke="#d4e6ec" stroke-width="1.7" stroke-linecap="round"/>
<path d="M263.8 719.1 L260.3 721.3" fill="none" stroke="#d4e6ec" stroke-width="1.7" stroke-linecap="round"/>
<path d="M242.6 864.6 L242.7 869.9" fill="none" stroke="#d4e6ec" stroke-width="1.3" stroke-linecap="round"/>
<path d="M238.9 854.7 L236.5 855.4" fill="none" stroke="#d4e6ec" stroke-width="1.7" stroke-linecap="round"/>
<path d="M365.8 828.0 L364.2 829.9" fill="none" stroke="#d4e6ec" stroke-width="1.3" stroke-linecap="round"/>
<path d="M306.3 785.8 L306.7 788.2" fill="none" stroke="#d4e6ec" stroke-width="1.3" stroke-linecap="round"/>
<path d="M305.7 815.3 L304.2 817.8" fill="none" stroke="#d4e6ec" stroke-width="1.7" stroke-linecap="round"/>
<path d="M226.2 806.1 L227.9 808.7" fill="none" stroke="#d4e6ec" stroke-width="1.3" stroke-linecap="round"/>
<path d="M324.0 876.4 L322.8 879.1" fill="none" stroke="#d4e6ec" stroke-width="1.0" stroke-linecap="round"/>
<path d="M230.5 780.6 L230.3 782.8" fill="none" stroke="#d4e6ec" stroke-width="1.0" stroke-linecap="round"/>
<path d="M301.7 833.9 L300.3 836.6" fill="none" stroke="#d4e6ec" stroke-width="1.7" stroke-linecap="round"/>
<path d="M290.5 772.2 L288.8 776.6" fill="none" stroke="#d4e6ec" stroke-width="1.7" stroke-linecap="round"/>
<path d="M289.9 835.6 L285.8 838.7" fill="none" stroke="#d4e6ec" stroke-width="1.7" stroke-linecap="round"/>
<path d="M354.5 710.7 L353.5 713.3" fill="none" stroke="#d4e6ec" stroke-width="1.0" stroke-linecap="round"/>
<path d="M261.1 742.0 L261.5 745.1" fill="none" stroke="#d4e6ec" stroke-width="1.7" stroke-linecap="round"/>
<path d="M301.4 735.0 L298.5 737.4" fill="none" stroke="#d4e6ec" stroke-width="1.7" stroke-linecap="round"/>
<path d="M234.6 817.7 L235.5 819.7" fill="none" stroke="#d4e6ec" stroke-width="1.0" stroke-linecap="round"/>
<path d="M374.1 725.8 L372.0 726.6" fill="none" stroke="#d4e6ec" stroke-width="1.3" stroke-linecap="round"/>
<path d="M294.3 841.5 L292.8 843.4" fill="none" stroke="#d4e6ec" stroke-width="1.0" stroke-linecap="round"/>
<path d="M367.6 763.8 L362.9 767.2" fill="none" stroke="#d4e6ec" stroke-width="1.7" stroke-linecap="round"/>
<path d="M297.1 760.3 L297.5 765.6" fill="none" stroke="#d4e6ec" stroke-width="1.3" stroke-linecap="round"/>
<path d="M293.3 719.1 L291.1 720.1" fill="none" stroke="#d4e6ec" stroke-width="1.3" stroke-linecap="round"/>
<path d="M371.2 722.1 L372.7 724.6" fill="none" stroke="#d4e6ec" stroke-width="1.3" stroke-linecap="round"/>
<path d="M342.8 759.7 L343.4 762.0" fill="none" stroke="#d4e6ec" stroke-width="1.7" stroke-linecap="round"/>
<path d="M298.0 772.7 L299.2 775.2" fill="none" stroke="#d4e6ec" stroke-width="1.3" stroke-linecap="round"/>
<path d="M338.1 793.3 L337.8 796.3" fill="none" stroke="#d4e6ec" stroke-width="1.7" stroke-linecap="round"/>
<path d="M342.5 705.3 L340.4 706.0" fill="none" stroke="#d4e6ec" stroke-width="1.0" stroke-linecap="round"/>
<path d="M265.1 848.7 L266.4 851.8" fill="none" stroke="#d4e6ec" stroke-width="1.3" stroke-linecap="round"/>
<path d="M276.9 890.6 L272.2 892.3" fill="none" stroke="#d4e6ec" stroke-width="1.7" stroke-linecap="round"/>
<path d="M274.1 753.0 L269.3 754.3" fill="none" stroke="#d4e6ec" stroke-width="1.7" stroke-linecap="round"/>
<path d="M369.9 710.3 L370.5 712.6" fill="none" stroke="#d4e6ec" stroke-width="1.7" stroke-linecap="round"/>
<path d="M284.8 748.0 L282.9 751.5" fill="none" stroke="#d4e6ec" stroke-width="1.3" stroke-linecap="round"/>
<path d="M253.8 859.9 L254.4 865.2" fill="none" stroke="#d4e6ec" stroke-width="1.0" stroke-linecap="round"/>
<path d="M318.3 763.5 L316.1 766.2" fill="none" stroke="#d4e6ec" stroke-width="1.7" stroke-linecap="round"/>
<path d="M238.0 737.1 L238.4 740.0" fill="none" stroke="#d4e6ec" stroke-width="1.0" stroke-linecap="round"/>
<path d="M324.7 794.8 L324.0 797.3" fill="none" stroke="#d4e6ec" stroke-width="1.3" stroke-linecap="round"/>
<path d="M266.3 714.1 L262.7 715.8" fill="none" stroke="#d4e6ec" stroke-width="1.7" stroke-linecap="round"/>
<path d="M373.8 732.2 L370.4 734.1" fill="none" stroke="#d4e6ec" stroke-width="1.7" stroke-linecap="round"/>
<path d="M261.7 806.3 L262.6 811.3" fill="none" stroke="#d4e6ec" stroke-width="1.3" stroke-linecap="round"/>
<path d="M270.7 812.1 L267.9 816.2" fill="none" stroke="#d4e6ec" stroke-width="1.0" stroke-linecap="round"/>
<path d="M292.8 734.7 L290.4 736.8" fill="none" stroke="#d4e6ec" stroke-width="1.7" stroke-linecap="round"/>
<path d="M318.0 693.0 L312.0 700.0 L300.0 709.0 L286.0 722.0 L292.0 726.0 L297.0 742.0 L295.0 760.0 L289.0 770.0 L282.0 779.0 L276.0 790.0 L270.0 798.0 L266.0 812.0 L262.0 828.0 L258.0 846.0 L250.0 862.0 L246.0 880.0 L252.0 895.0" fill="none" stroke="#f0d9dc" stroke-width=".9" stroke-linejoin="round"/>
<path d="M289.0 770.0 L302.0 764.0 L316.0 760.0 L332.0 762.0 L345.0 768.0 L352.0 780.0 L358.0 790.0 L364.0 800.0" fill="none" stroke="#f0d9dc" stroke-width=".9" stroke-linejoin="round"/>
<path d="M332.0 693.0 L340.0 702.0 L350.0 712.0 L362.0 722.0 L368.0 733.0 L375.0 740.0 L382.0 743.0" fill="none" stroke="#f0d9dc" stroke-width=".9" stroke-linejoin="round"/>
<path d="M237.0 799.0 L245.0 793.0 L252.0 792.0 L257.0 798.0" fill="none" stroke="#f0d9dc" stroke-width=".9" stroke-linejoin="round"/>
<path d="M270.0 798.0 L284.0 805.0 L290.0 818.0 L296.0 836.0 L304.0 852.0 L316.0 862.0 L328.0 866.0 L336.0 880.0 L340.0 893.0" fill="none" stroke="#f0d9dc" stroke-width=".9" stroke-linejoin="round"/>
<path d="M340.0 858.0 L346.0 852.0 L354.0 850.0" fill="none" stroke="#f0d9dc" stroke-width=".9" stroke-linejoin="round"/>
<path d="M205.0 693.0 L207.0 703.0 L212.0 712.0 L222.0 722.0 L236.0 726.0 L247.0 724.0 L256.0 731.0" fill="none" stroke="#f6ecd2" stroke-width=".9" stroke-linejoin="round"/>
<path d="M247.0 724.0 L246.0 712.0 L252.0 702.0 L262.0 694.0" fill="none" stroke="#f6ecd2" stroke-width=".9" stroke-linejoin="round"/>
<path d="M256.0 731.0 L268.0 738.0 L282.0 744.0 L292.0 742.0 L306.0 732.0 L322.0 724.0 L346.0 720.0" fill="none" stroke="#f6ecd2" stroke-width=".9" stroke-linejoin="round"/>
<path d="M346.0 720.0 L352.0 732.0 L358.0 742.0 L370.0 752.0 L382.0 757.0" fill="none" stroke="#f6ecd2" stroke-width=".9" stroke-linejoin="round"/>
<path d="M249.0 770.0 L250.0 782.0 L256.0 790.0 L264.0 796.0 L276.0 790.0" fill="none" stroke="#f6ecd2" stroke-width=".9" stroke-linejoin="round"/>
<path d="M214.0 860.0 L216.0 872.0 L224.0 882.0 L232.0 896.0 L238.0 908.0" fill="none" stroke="#f6ecd2" stroke-width=".9" stroke-linejoin="round"/>
<path d="M336.0 808.0 L346.0 806.0 L354.0 812.0 L360.0 822.0 L368.0 830.0 L376.0 836.0" fill="none" stroke="#f6ecd2" stroke-width=".9" stroke-linejoin="round"/>
<path d="M296.0 836.0 L290.0 850.0 L286.0 866.0 L288.0 884.0 L284.0 900.0" fill="none" stroke="#f6ecd2" stroke-width=".9" stroke-linejoin="round"/>
<path d="M352.0 868.0 L362.0 858.0 L372.0 850.0" fill="none" stroke="#f6ecd2" stroke-width=".9" stroke-linejoin="round"/>
<path d="M196.2 742.5 L194.8 750.0 L193.6 761.5 L187.0 764.5 L184.2 770.0 L183.6 778.0 L184.6 792.0 L186.6 805.5 L192.5 809.0 L194.5 820.0 L199.3 838.0 L199.8 844.0 L206.0 849.5 L215.0 858.0" fill="none" stroke="#e2b23f" stroke-width="2.4" stroke-linecap="round" stroke-linejoin="round"/>
<rect x="195.45" y="743.45" width="2.1" height="2.1" fill="#3d4a63"/>
<rect x="196.25" y="822.95" width="2.1" height="2.1" fill="#3d4a63"/>
<rect x="215.14999999999998" y="858.5500000000001" width="2.1" height="2.1" fill="#3d4a63"/>
<rect x="374.15" y="839.35" width="2.1" height="2.1" fill="#3d4a63"/>
</svg></div>
<div class="b" style="left:25px;top:702px;width:29.5px;height:56.5px;border:1.5px solid #b8bcbf;border-radius:4px;background:#fff"></div>
<div class="b" style="left:26.5px;top:729.5px;width:26.5px;height:1px;background:#ccc"></div>
<div class="b" style="left:25px;top:768.5px;width:29.5px;height:29.5px;border:1.5px solid #b8bcbf;border-radius:3px;background:#fff"></div>
<svg class="i" style="left:28.2px;top:771.7px" width="23" height="23" viewBox="0 0 24 24" fill="#111"><path d="M7 14H5v5h5v-2H7v-3zm-2-4h2V7h3V5H5v5zm12 7h-3v2h5v-5h-2v3zM14 5v2h3v3h2V5h-5z"/></svg>
<div class="b" style="left:237px;top:895.5px;width:145px;height:12.5px;background:rgba(255,255,255,.75);border-bottom-right-radius:9px"></div>
<div class="b panel" style="left:15.4px;top:923px;width:367px;height:89.5px;"></div>
<div class="in cm" style="left:30px;top:953px;width:338px;height:45px;font-size:12.6px"></div>
<div class="b panel" style="left:397px;top:96px;width:1511px;height:74px;"></div>
<div class="in" style="left:411px;top:127px;width:235px;height:29px;font-size:12.6px"><svg class="dd" width="20" height="20" viewBox="0 0 24 24" fill="#666"><path d="M7 10l5 5 5-5z"/></svg></div>
<div class="in" style="left:661px;top:127px;width:196px;height:29px;font-size:12.6px"></div>
<svg class="i" style="left:833.5px;top:131.3px" width="20" height="20" viewBox="0 0 24 24" fill="#666"><path d="M17 12h-5v5h5v-5zM16 1v2H8V1H6v2H5c-1.11 0-1.99.9-1.99 2L3 19c0 1.1.89 2 2 2h14c1.1 0 2-.9 2-2V5c0-1.1-.9-2-2-2h-1V1h-2zm3 18H5V8h14v11z"/></svg>
<svg class="i" style="left:864.9px;top:133.5px" width="20.2" height="20.2" viewBox="0 0 24 24" fill="#3b4fd8"><path d="M19 3H5c-1.11 0-2 .9-2 2v14c0 1.1.89 2 2 2h14c1.11 0 2-.9 2-2V5c0-1.1-.89-2-2-2zm-9 14l-5-5 1.41-1.41L10 14.17l7.59-7.59L19 8l-9 9z"/></svg>
<div class="in dis" style="left:910px;top:127px;width:196px;height:29px;font-size:12.6px"></div>
<svg class="i" style="left:1114.3px;top:133.4px" width="20.2" height="20.2" viewBox="0 0 24 24" fill="#444"><path d="M19 5v14H5V5h14m0-2H5c-1.1 0-2 .9-2 2v14c0 1.1.9 2 2 2h14c1.1 0 2-.9 2-2V5c0-1.1-.9-2-2-2z"/></svg>
<div class="card" style="left:397px;top:184px;width:1511px;height:116.5px"></div>
<div class="chip" style="left:1661px;top:197px;width:35.8px;height:16px;border-color:#bdbdbd"></div>
<svg class="i" style="left:1710.2px;top:195.5px" width="19.6" height="19.6" viewBox="0 0 24 24" fill="#666"><path d="M16 17.01V10h-2v7.01h-3L15 21l4-3.99h-3zM9 3L5 6.99h3V14h2V6.99h3L9 3z"/></svg>
<svg class="i" style="left:1743.6px;top:195.5px" width="19.6" height="19.6" viewBox="0 0 24 24" fill="#666"><path d="M10 18h5V5h-5v13zm-6 0h5V5H4v13zM16 5v13h5V5h-5z"/></svg>
<svg class="i" style="left:1777px;top:195.5px" width="19.6" height="19.6" viewBox="0 0 24 24" fill="#666"><path d="M10 18h4v-2h-4v2zM3 6v2h18V6H3zm3 7h12v-2H6v2z"/></svg>
<svg class="i" style="left:1810.2px;top:195.5px" width="19.6" height="19.6" viewBox="0 0 24 24" fill="#666"><path d="M4 15h16v-2H4v2zm0 4h16v-2H4v2zm0-8h16V9H4v2zm0-6v2h16V5H4z"/></svg>
<svg class="i" style="left:1843.6px;top:195.5px" width="19.6" height="19.6" viewBox="0 0 24 24" fill="#666"><path d="M19 9h-4V3H9v6H5l7 7 7-7zM5 18v2h14v-2H5z"/></svg>
<svg class="i" style="left:1877px;top:195.5px" width="19.6" height="19.6" viewBox="0 0 24 24" fill="#bbb"><path d="M12 5.83L15.17 9l1.41-1.41L12 3 7.41 7.59 8.83 9 12 5.83zm0 12.34L8.83 15l-1.41 1.41L12 21l4.59-4.59L15.17 15 12 18.17z"/></svg>
<div class="b" style="left:398px;top:256px;width:1509px;height:1px;background:#e2e2e2"></div>
<div class="b" style="left:398px;top:257px;width:1509px;height:21px;background:#f5f5f5"></div>
<div class="b" style="left:1452.8px;top:257px;width:78px;height:21px;background:#ebebeb"></div>
<div class="b" style="left:398px;top:278px;width:1509px;height:1px;background:#e2e2e2"></div>
<svg class="i" style="left:558.2px;top:258.9px" width="16" height="16" viewBox="0 0 24 24" fill="#7a7a7a"><path d="M12 17c1.1 0 2-.9 2-2s-.9-2-2-2-2 .9-2 2 .9 2 2 2zm6-9h-1V6c0-2.76-2.24-5-5-5S7 3.24 7 6h1.9c0-1.71 1.39-3.1 3.1-3.1 1.71 0 3.1 1.39 3.1 3.1v2H6c-1.1 0-2 .9-2 2v10c0 1.1.9 2 2 2h12c1.1 0 2-.9 2-2V10c0-1.1-.9-2-2-2zm0 12H6V10h12v10z"/></svg>
<svg class="i" style="left:694px;top:258.9px" width="16" height="16" viewBox="0 0 24 24" fill="#7a7a7a"><path d="M12 17c1.1 0 2-.9 2-2s-.9-2-2-2-2 .9-2 2 .9 2 2 2zm6-9h-1V6c0-2.76-2.24-5-5-5S7 3.24 7 6h1.9c0-1.71 1.39-3.1 3.1-3.1 1.71 0 3.1 1.39 3.1 3.1v2H6c-1.1 0-2 .9-2 2v10c0 1.1.9 2 2 2h12c1.1 0 2-.9 2-2V10c0-1.1-.9-2-2-2zm0 12H6V10h12v10z"/></svg>
<svg class="i" style="left:1640.9px;top:259.2px" width="16.2" height="16.2" viewBox="0 0 24 24" fill="#555"><path d="M19 5v14H5V5h14m0-2H5c-1.1 0-2 .9-2 2v14c0 1.1.9 2 2 2h14c1.1 0 2-.9 2-2V5c0-1.1-.9-2-2-2z"/></svg>
<svg class="i" style="left:1851.6px;top:258.9px" width="16.8" height="16.8" viewBox="0 0 24 24" fill="#555"><path d="M19 19H5V5h7V3H5c-1.11 0-2 .9-2 2v14c0 1.1.89 2 2 2h14c1.1 0 2-.9 2-2v-7h-2v7zM14 3v2h3.59l-9.83 9.83 1.41 1.41L19 6.41V10h2V3h-7z"/></svg>
<svg class="i" style="left:1883.2px;top:258.9px" width="16.8" height="16.8" viewBox="0 0 24 24" fill="#555"><path d="M12 8c1.1 0 2-.9 2-2s-.9-2-2-2-2 .9-2 2 .9 2 2 2zm0 2c-1.1 0-2 .9-2 2s.9 2 2 2 2-.9 2-2-.9-2-2-2zm0 6c-1.1 0-2 .9-2 2s.9 2 2 2 2-.9 2-2-.9-2-2-2z"/></svg>
<svg class="i" style="left:558.2px;top:280.5px" width="16" height="16" viewBox="0 0 24 24" fill="#7a7a7a"><path d="M12 17c1.1 0 2-.9 2-2s-.9-2-2-2-2 .9-2 2 .9 2 2 2zm6-9h-1V6c0-2.76-2.24-5-5-5S7 3.24 7 6h1.9c0-1.71 1.39-3.1 3.1-3.1 1.71 0 3.1 1.39 3.1 3.1v2H6c-1.1 0-2 .9-2 2v10c0 1.1.9 2 2 2h12c1.1 0 2-.9 2-2V10c0-1.1-.9-2-2-2zm0 12H6V10h12v10z"/></svg>
<svg class="i" style="left:694px;top:280.5px" width="16" height="16" viewBox="0 0 24 24" fill="#7a7a7a"><path d="M12 17c1.1 0 2-.9 2-2s-.9-2-2-2-2 .9-2 2 .9 2 2 2zm6-9h-1V6c0-2.76-2.24-5-5-5S7 3.24 7 6h1.9c0-1.71 1.39-3.1 3.1-3.1 1.71 0 3.1 1.39 3.1 3.1v2H6c-1.1 0-2 .9-2 2v10c0 1.1.9 2 2 2h12c1.1 0 2-.9 2-2V10c0-1.1-.9-2-2-2zm0 12H6V10h12v10z"/></svg>
<svg class="i" style="left:1640.9px;top:280.8px" width="16.2" height="16.2" viewBox="0 0 24 24" fill="#555"><path d="M19 5v14H5V5h14m0-2H5c-1.1 0-2 .9-2 2v14c0 1.1.9 2 2 2h14c1.1 0 2-.9 2-2V5c0-1.1-.9-2-2-2z"/></svg>
<svg class="i" style="left:1851.6px;top:280.5px" width="16.8" height="16.8" viewBox="0 0 24 24" fill="#555"><path d="M19 19H5V5h7V3H5c-1.11 0-2 .9-2 2v14c0 1.1.89 2 2 2h14c1.1 0 2-.9 2-2v-7h-2v7zM14 3v2h3.59l-9.83 9.83 1.41 1.41L19 6.41V10h2V3h-7z"/></svg>
<svg class="i" style="left:1883.2px;top:280.5px" width="16.8" height="16.8" viewBox="0 0 24 24" fill="#555"><path d="M12 8c1.1 0 2-.9 2-2s-.9-2-2-2-2 .9-2 2 .9 2 2 2zm0 2c-1.1 0-2 .9-2 2s.9 2 2 2 2-.9 2-2-.9-2-2-2zm0 6c-1.1 0-2 .9-2 2s.9 2 2 2 2-.9 2-2-.9-2-2-2z"/></svg>
<div class="card" style="left:397px;top:316px;width:1511px;height:94.5px"></div>
<svg class="i" style="left:1710.5px;top:327.5px" width="19" height="19" viewBox="0 0 24 24" fill="#3b4fd8"><path d="M19 13h-6v6h-2v-6H5v-2h6V5h2v6h6v2z"/></svg>
<div class="b" style="left:398px;top:388px;width:1509px;height:1px;background:#e2e2e2"></div>
<div class="b" style="left:398px;top:389px;width:1509px;height:20.5px;background:#eef0fc;border-radius:0 0 3px 3px"></div>
<svg class="i" style="left:1189.1px;top:390.1px" width="16.8" height="16.8" viewBox="0 0 24 24" fill="#555"><path d="M19 19H5V5h7V3H5c-1.11 0-2 .9-2 2v14c0 1.1.89 2 2 2h14c1.1 0 2-.9 2-2v-7h-2v7zM14 3v2h3.59l-9.83 9.83 1.41 1.41L19 6.41V10h2V3h-7z"/></svg>
<div class="b" style="left:1562px;top:391px;width:2px;height:15px;background:#f0a24a;opacity:.85"></div>
<div class="card" style="left:397px;top:425px;width:1511px;height:120px"></div>
<svg class="i" style="left:1710.5px;top:437.2px" width="19" height="19" viewBox="0 0 24 24" fill="#3b4fd8"><path d="M19 13h-6v6h-2v-6H5v-2h6V5h2v6h6v2z"/></svg>
<div class="b" style="left:398px;top:501.3px;width:1509px;height:1px;background:#e2e2e2"></div>
<div class="b" style="left:398px;top:522.4px;width:1509px;height:1px;background:#e2e2e2"></div>
<svg class="i" style="left:727.2px;top:504.3px" width="16.2" height="16.2" viewBox="0 0 24 24" fill="#555"><path d="M19 5v14H5V5h14m0-2H5c-1.1 0-2 .9-2 2v14c0 1.1.9 2 2 2h14c1.1 0 2-.9 2-2V5c0-1.1-.9-2-2-2z"/></svg>
<svg class="i" style="left:1209.2px;top:504.3px" width="16.2" height="16.2" viewBox="0 0 24 24" fill="#555"><path d="M19 5v14H5V5h14m0-2H5c-1.1 0-2 .9-2 2v14c0 1.1.9 2 2 2h14c1.1 0 2-.9 2-2V5c0-1.1-.9-2-2-2z"/></svg>
<svg class="i" style="left:1850.9px;top:503.7px" width="16.8" height="16.8" viewBox="0 0 24 24" fill="#555"><path d="M19 19H5V5h7V3H5c-1.11 0-2 .9-2 2v14c0 1.1.89 2 2 2h14c1.1 0 2-.9 2-2v-7h-2v7zM14 3v2h3.59l-9.83 9.83 1.41 1.41L19 6.41V10h2V3h-7z"/></svg>
<svg class="i" style="left:1882.6px;top:503.7px" width="16.8" height="16.8" viewBox="0 0 24 24" fill="#555"><path d="M12 8c1.1 0 2-.9 2-2s-.9-2-2-2-2 .9-2 2 .9 2 2 2zm0 2c-1.1 0-2 .9-2 2s.9 2 2 2 2-.9 2-2-.9-2-2-2zm0 6c-1.1 0-2 .9-2 2s.9 2 2 2 2-.9 2-2-.9-2-2-2z"/></svg>
<svg class="i" style="left:727.2px;top:526px" width="16.2" height="16.2" viewBox="0 0 24 24" fill="#555"><path d="M19 5v14H5V5h14m0-2H5c-1.1 0-2 .9-2 2v14c0 1.1.9 2 2 2h14c1.1 0 2-.9 2-2V5c0-1.1-.9-2-2-2z"/></svg>
<svg class="i" style="left:1209.2px;top:526px" width="16.2" height="16.2" viewBox="0 0 24 24" fill="#555"><path d="M19 5v14H5V5h14m0-2H5c-1.1 0-2 .9-2 2v14c0 1.1.9 2 2 2h14c1.1 0 2-.9 2-2V5c0-1.1-.9-2-2-2z"/></svg>
<svg class="i" style="left:1850.9px;top:525.4px" width="16.8" height="16.8" viewBox="0 0 24 24" fill="#555"><path d="M19 19H5V5h7V3H5c-1.11 0-2 .9-2 2v14c0 1.1.89 2 2 2h14c1.1 0 2-.9 2-2v-7h-2v7zM14 3v2h3.59l-9.83 9.83 1.41 1.41L19 6.41V10h2V3h-7z"/></svg>
<svg class="i" style="left:1882.6px;top:525.4px" width="16.8" height="16.8" viewBox="0 0 24 24" fill="#555"><path d="M12 8c1.1 0 2-.9 2-2s-.9-2-2-2-2 .9-2 2 .9 2 2 2zm0 2c-1.1 0-2 .9-2 2s.9 2 2 2 2-.9 2-2-.9-2-2-2zm0 6c-1.1 0-2 .9-2 2s.9 2 2 2 2-.9 2-2-.9-2-2-2z"/></svg>
<div class="card" style="left:397px;top:560.2px;width:1511px;height:159.1px"></div>
<svg class="i" style="left:1533.8px;top:571.8px" width="19" height="19" viewBox="0 0 24 24" fill="#3b4fd8"><path d="M19 13h-6v6h-2v-6H5v-2h6V5h2v6h6v2z"/></svg>
<div class="chip" style="left:1568px;top:569.3px;width:100px;height:25px"></div>
<div class="chip" style="left:1675px;top:569.3px;width:62px;height:25px"></div>
<svg class="i" style="left:1645.25px;top:573.65px" width="15.5" height="15.5" viewBox="0 0 24 24" fill="#aaa"><path d="M7 10l5 5 5-5z"/></svg>
<svg class="i" style="left:1714.75px;top:573.65px" width="15.5" height="15.5" viewBox="0 0 24 24" fill="#aaa"><path d="M7 10l5 5 5-5z"/></svg>
<svg class="i" style="left:1743.6px;top:571.7px" width="19.6" height="19.6" viewBox="0 0 24 24" fill="#666"><path d="M10 18h5V5h-5v13zm-6 0h5V5H4v13zM16 5v13h5V5h-5z"/></svg>
<svg class="i" style="left:1777px;top:571.7px" width="19.6" height="19.6" viewBox="0 0 24 24" fill="#666"><path d="M10 18h4v-2h-4v2zM3 6v2h18V6H3zm3 7h12v-2H6v2z"/></svg>
<svg class="i" style="left:1810.2px;top:571.7px" width="19.6" height="19.6" viewBox="0 0 24 24" fill="#666"><path d="M4 15h16v-2H4v2zm0 4h16v-2H4v2zm0-8h16V9H4v2zm0-6v2h16V5H4z"/></svg>
<svg class="i" style="left:1843.6px;top:571.7px" width="19.6" height="19.6" viewBox="0 0 24 24" fill="#666"><path d="M19 9h-4V3H9v6H5l7 7 7-7zM5 18v2h14v-2H5z"/></svg>
<svg class="i" style="left:1877px;top:571.7px" width="19.6" height="19.6" viewBox="0 0 24 24" fill="#666"><path d="M7.41 18.59L8.83 20 12 16.83 15.17 20l1.41-1.41L12 14l-4.59 4.59zm9.18-13.18L15.17 4 12 7.17 8.83 4 7.41 5.41 12 10l4.59-4.59z"/></svg>
<div class="b" style="left:398px;top:632px;width:1509px;height:1px;background:#e2e2e2"></div>
<svg class="i" style="left:1808.9px;top:635.4px" width="16.2" height="16.2" viewBox="0 0 24 24" fill="#555"><path d="M19 5v14H5V5h14m0-2H5c-1.1 0-2 .9-2 2v14c0 1.1.9 2 2 2h14c1.1 0 2-.9 2-2V5c0-1.1-.9-2-2-2z"/></svg>
<svg class="i" style="left:1883.2px;top:634.8px" width="16.8" height="16.8" viewBox="0 0 24 24" fill="#555"><path d="M12 8c1.1 0 2-.9 2-2s-.9-2-2-2-2 .9-2 2 .9 2 2 2zm0 2c-1.1 0-2 .9-2 2s.9 2 2 2 2-.9 2-2-.9-2-2-2zm0 6c-1.1 0-2 .9-2 2s.9 2 2 2 2-.9 2-2-.9-2-2-2z"/></svg>
<div class="b" style="left:398px;top:654px;width:1509px;height:1px;background:#e2e2e2"></div>
<svg class="i" style="left:1808.9px;top:657px" width="16.2" height="16.2" viewBox="0 0 24 24" fill="#555"><path d="M19 5v14H5V5h14m0-2H5c-1.1 0-2 .9-2 2v14c0 1.1.9 2 2 2h14c1.1 0 2-.9 2-2V5c0-1.1-.9-2-2-2z"/></svg>
<svg class="i" style="left:1883.2px;top:656.4px" width="16.8" height="16.8" viewBox="0 0 24 24" fill="#555"><path d="M12 8c1.1 0 2-.9 2-2s-.9-2-2-2-2 .9-2 2 .9 2 2 2zm0 2c-1.1 0-2 .9-2 2s.9 2 2 2 2-.9 2-2-.9-2-2-2zm0 6c-1.1 0-2 .9-2 2s.9 2 2 2 2-.9 2-2-.9-2-2-2z"/></svg>
<div class="b" style="left:398px;top:675px;width:1509px;height:1px;background:#e2e2e2"></div>
<svg class="i" style="left:1808.9px;top:678.6px" width="16.2" height="16.2" viewBox="0 0 24 24" fill="#555"><path d="M19 5v14H5V5h14m0-2H5c-1.1 0-2 .9-2 2v14c0 1.1.9 2 2 2h14c1.1 0 2-.9 2-2V5c0-1.1-.9-2-2-2z"/></svg>
<svg class="i" style="left:1883.2px;top:678px" width="16.8" height="16.8" viewBox="0 0 24 24" fill="#555"><path d="M12 8c1.1 0 2-.9 2-2s-.9-2-2-2-2 .9-2 2 .9 2 2 2zm0 2c-1.1 0-2 .9-2 2s.9 2 2 2 2-.9 2-2-.9-2-2-2zm0 6c-1.1 0-2 .9-2 2s.9 2 2 2 2-.9 2-2-.9-2-2-2z"/></svg>
<div class="b" style="left:398px;top:697px;width:1509px;height:1px;background:#e2e2e2"></div>
<svg class="i" style="left:1808.9px;top:700.2px" width="16.2" height="16.2" viewBox="0 0 24 24" fill="#444"><path d="M19 3H5c-1.11 0-2 .9-2 2v14c0 1.1.89 2 2 2h14c1.11 0 2-.9 2-2V5c0-1.1-.89-2-2-2zm-9 14l-5-5 1.41-1.41L10 14.17l7.59-7.59L19 8l-9 9z"/></svg>
<svg class="i" style="left:1883.2px;top:699.6px" width="16.8" height="16.8" viewBox="0 0 24 24" fill="#555"><path d="M12 8c1.1 0 2-.9 2-2s-.9-2-2-2-2 .9-2 2 .9 2 2 2zm0 2c-1.1 0-2 .9-2 2s.9 2 2 2 2-.9 2-2-.9-2-2-2zm0 6c-1.1 0-2 .9-2 2s.9 2 2 2 2-.9 2-2-.9-2-2-2z"/></svg>
<div class="b panel" style="left:1922.3px;top:96px;width:367.4px;height:707.8px;"></div>
<svg class="i" style="left:2091.2px;top:116px" width="19" height="19" viewBox="0 0 24 24" fill="#555"><rect x="2.6" y="9.4" width="4.4" height="12" rx="2.2"/><rect x="9.8" y="2.6" width="4.4" height="18.8" rx="2.2"/><rect x="17" y="14.6" width="4.4" height="6.8" rx="2.2"/></svg>
<svg class="i" style="left:2122.65px;top:114.85px" width="21.5" height="21.5" viewBox="0 0 24 24" fill="#555"><path d="M19.88 18.47c.44-.7.7-1.51.7-2.39 0-2.49-2.01-4.5-4.5-4.5s-4.5 2.01-4.5 4.5 2.01 4.5 4.49 4.5c.88 0 1.7-.26 2.39-.7L21.580 23 23 21.580l-3.120-3.110zm-3.800.11c-1.380 0-2.500-1.120-2.500-2.500s1.120-2.500 2.500-2.500 2.500 1.120 2.500 2.500-1.120 2.500-2.500 2.500zm-.36-8.500c-.74.02-1.450.18-2.100.45l-.55-.83-3.800 6.180-3.010-3.520-3.630 5.810L1 17l5-8 3 3.500L13 6l2.720 4.080zm2.590.5c-.64-.28-1.330-.45-2.050-.49L21.380 2 23 3.180l-4.690 7.400z"/></svg>
<div class="b" style="left:1922.3px;top:245.6px;width:367.4px;height:24.8px;background:#b5e9d2;box-shadow:inset 0 1px 0 rgba(0,0,0,.06),inset 0 -1px 0 rgba(0,0,0,.08)"></div>
<div class="b" style="left:1922.3px;top:313.3px;width:367.4px;height:24.4px;background:#b5e9d2;box-shadow:inset 0 1px 0 rgba(0,0,0,.06),inset 0 -1px 0 rgba(0,0,0,.08)"></div>
<div class="b" style="left:1937px;top:472.5px;width:338px;height:1px;background:#d9d9e0"></div>
<div class="in dis sm" style="left:2020.4px;top:493.3px;width:91px;height:21.4px;font-size:12.6px"></div>
<div class="b" style="left:1937px;top:552.2px;width:338px;height:1px;background:#d9d9e0"></div>
<div class="in sm" style="left:2020.4px;top:558.4px;width:91px;height:22.2px;font-size:12.6px"></div>
<div class="in sm" style="left:2020.4px;top:588.3px;width:91px;height:22.3px;font-size:12.6px"></div>
<div class="b" style="left:1922.3px;top:616.4px;width:367.4px;height:57.8px;background:#b5e9d2;box-shadow:inset 0 1px 0 rgba(0,0,0,.06),inset 0 -1px 0 rgba(0,0,0,.08)"></div>
<div class="in sm" style="left:1990.4px;top:637.2px;width:127.2px;height:21.2px;background:#a9dcc6;border-color:#a4d4bf"></div>
<svg class="i" style="left:2126.8px;top:641.4px" width="18.4" height="18.4" viewBox="0 0 24 24" fill="#444"><path d="M19 5v14H5V5h14m0-2H5c-1.1 0-2 .9-2 2v14c0 1.1.9 2 2 2h14c1.1 0 2-.9 2-2V5c0-1.1-.9-2-2-2z"/></svg>
<div class="b" style="left:1922.3px;top:738.6px;width:367.4px;height:50.4px;background:#b5e9d2;box-shadow:inset 0 1px 0 rgba(0,0,0,.06),inset 0 -1px 0 rgba(0,0,0,.08)"></div>
<div class="in sm" style="left:2168px;top:759.4px;width:99.6px;height:21.6px;background:#a9dcc6;border-color:#a4d4bf"></div>
<div class="ov">
<span class="t c" style="left:30px;top:17.85px;transform:scaleX(0.922);transform-origin:left center;font-size:16.2px;color:#1c1c1c;-webkit-text-stroke:.2px #1c1c1c">VOYAGE</span>
<span class="t c" style="left:-50.5px;width:400px;text-align:center;top:17.45px;transform:scaleX(1.025);transform-origin:center center;font-size:10.35px;color:#333">Mabl-mloeqmdtqw</span>
<span class="t c" style="left:204px;top:16.85px;transform:scaleX(1.015);transform-origin:left center;font-size:12.6px;color:#808080">9ssibzvvioi001</span>
<span class="t c" style="left:303.5px;top:16.65px;transform:scaleX(0.963);transform-origin:left center;font-size:10.8px;font-weight:bold;color:#fff">Nominated</span>
<span class="t tab" style="left:-127px;width:400px;text-align:center;top:52.3px;transform:scaleX(0.971);transform-origin:center center;color:#4a5bd4">Overview</span>
<span class="t tab" style="left:17px;width:400px;text-align:center;top:52.3px;transform:scaleX(0.978);transform-origin:center center;">Cargo</span>
<span class="t tab" style="left:161px;width:400px;text-align:center;top:52.3px;transform:scaleX(0.986);transform-origin:center center;">Bunkers</span>
<span class="t tab" style="left:309.5px;width:400px;text-align:center;top:52.3px;transform:scaleX(0.998);transform-origin:center center;">Various Cost/Revenue</span>
<span class="t tab" style="left:458.2px;width:400px;text-align:center;top:52.3px;transform:scaleX(0.993);transform-origin:center center;">Organisational Data</span>
<span class="t tab" style="left:602px;width:400px;text-align:center;top:52.3px;transform:scaleX(1.006);transform-origin:center center;">Invoices</span>
<span class="t tab" style="left:746px;width:400px;text-align:center;top:52.3px;transform:scaleX(1.015);transform-origin:center center;">Downtimes</span>
<span class="t tab" style="left:890px;width:400px;text-align:center;top:52.3px;transform:scaleX(0.973);transform-origin:center center;">Related</span>
<span class="t tab" style="left:1034px;width:400px;text-align:center;top:52.3px;transform:scaleX(1.013);transform-origin:center center;">Comments</span>
<span class="t hdb" style="left:30px;top:107px;transform:scaleX(1.020);transform-origin:left center;">Vessel</span>
<span class="t l lg" style="left:30px;top:152.25px;transform:scaleX(1.008);transform-origin:left center;">Vessel</span>
<span class="t l" style="left:206px;top:151.75px;transform:scaleX(1.009);transform-origin:left center;">Ballast Port *</span>
<div class="in dis tx" style="left:30px;top:170px;width:162px;height:29px;font-size:12.6px"><span class="iv" style="transform:scaleX(1.025);transform-origin:left center">Mabl-mloeqmdtqw</span><span class="dd" style="width:20px;height:20px"></span></div>
<div class="in tx" style="left:206px;top:170px;width:162px;height:29px;font-size:12.6px"><span class="iv" style="transform:scaleX(0.892);transform-origin:left center">BERGEN</span><span class="dd" style="width:20px;height:20px"></span></div>
<span class="t l" style="left:30px;top:204.95px;transform:scaleX(0.974);transform-origin:left center;">Percent Extra at Sea</span>
<span class="t l lg" style="left:206px;top:203.75px;transform:scaleX(0.988);transform-origin:left center;">Total Days Extra At Sea</span>
<div class="in tx" style="left:30px;top:222px;width:162px;height:29px;font-size:12.6px"><span class="iv" style="margin-left:auto;transform:scaleX(0.940);transform-origin:right center">5.00 <span class="sf">%</span></span></div>
<div class="in dis tx" style="left:206px;top:222px;width:162px;height:29px;font-size:12.6px"><span class="iv" style="margin-left:auto;transform:scaleX(0.992);transform-origin:right center">0.02 d</span></div>
<span class="t sh" style="left:30px;top:265.6px;transform:scaleX(0.931);transform-origin:left center;">Speed &amp; Consumption</span>
<span class="t l" style="left:30px;top:288.45px;transform:scaleX(0.983);transform-origin:left center;">Speed Ballast</span>
<span class="t l" style="left:206px;top:288.45px;transform:scaleX(0.967);transform-origin:left center;">Speed Laden</span>
<div class="in tx" style="left:30px;top:307px;width:162px;height:28.5px;font-size:12.6px"><span class="iv" style="transform:scaleX(1.003);transform-origin:left center">10 kn, 10 MT/d</span><span class="dd" style="width:20px;height:20px"></span></div>
<div class="in tx" style="left:206px;top:307px;width:162px;height:28.5px;font-size:12.6px"><span class="iv" style="transform:scaleX(1.003);transform-origin:left center">10 kn, 10 MT/d</span><span class="dd" style="width:20px;height:20px"></span></div>
<span class="t l" style="left:30px;top:348.75px;transform:scaleX(0.966);transform-origin:left center;">FO Port Idle</span>
<span class="t l" style="left:206px;top:348.75px;transform:scaleX(0.977);transform-origin:left center;">FO Port Working</span>
<div class="in tx" style="left:30px;top:367px;width:162px;height:29px;font-size:12.6px"><span class="iv" style="margin-left:auto;transform:scaleX(1.018);transform-origin:right center">0.00 <span class="sf">MT/day</span></span></div>
<div class="in tx" style="left:206px;top:367px;width:162px;height:29px;font-size:12.6px"><span class="iv" style="margin-left:auto;transform:scaleX(1.018);transform-origin:right center">0.00 <span class="sf">MT/day</span></span></div>
<span class="t sh" style="left:30px;top:416.6px;transform:scaleX(0.940);transform-origin:left center;">TC In Contract</span>
<span class="t l" style="left:30px;top:446.75px;transform:scaleX(0.984);transform-origin:left center;">TC In Contract</span>
<span class="t l" style="left:206px;top:446.75px;transform:scaleX(0.976);transform-origin:left center;">Daily Hire</span>
<div class="in tx" style="left:30px;top:465px;width:162px;height:29px;font-size:12.6px"><span class="iv ph" style="transform:scaleX(0.997);transform-origin:left center">Type to search.</span><span class="dd" style="width:20px;height:20px"></span></div>
<div class="in tx" style="left:206px;top:465px;width:162px;height:29px;font-size:12.6px"><span class="iv" style="margin-left:auto;transform:scaleX(0.919);transform-origin:right center">0 <span class="sf">USD</span></span></div>
<span class="t l" style="left:30px;top:498.75px;transform:scaleX(0.997);transform-origin:left center;">Ballast Bonus</span>
<span class="t l" style="left:206px;top:498.75px;width:74px;overflow:hidden"><span style="display:inline-block;transform:scaleX(1.010);transform-origin:left center">Address Commission</span></span>
<span class="t l lg" style="left:294.3px;top:498.75px;transform:scaleX(0.997);transform-origin:left center;">Last Voyage</span>
<div class="in tx" style="left:30px;top:517px;width:162px;height:29px;font-size:12.6px"><span class="iv" style="margin-left:auto;transform:scaleX(0.919);transform-origin:right center">0 <span class="sf">USD</span></span></div>
<div class="in tx" style="left:206px;top:517px;width:74px;height:29px;font-size:12.6px"><span class="iv" style="margin-left:auto;transform:scaleX(0.940);transform-origin:right center">0.00 <span class="sf">%</span></span></div>
<span class="t l" style="left:30px;top:551.05px;transform:scaleX(0.981);transform-origin:left center;">TC Benchmark</span>
<span class="t l" style="left:206px;top:551.05px;transform:scaleX(0.979);transform-origin:left center;">TC Benchmark Index</span>
<div class="in tx" style="left:30px;top:569px;width:162px;height:29px;font-size:12.6px"><span class="iv" style="margin-left:auto;transform:scaleX(0.940);transform-origin:right center">100 <span class="sf">%</span></span></div>
<div class="in tx" style="left:206px;top:569px;width:162px;height:29px;font-size:12.6px"><span class="iv ph" style="transform:scaleX(0.997);transform-origin:left center">Type to search.</span><span class="dd" style="width:20px;height:20px"></span></div>
<span class="t hdb" style="left:30px;top:644.5px;transform:scaleX(1.017);transform-origin:left center;">Consumption Details</span>
<div class="b" style="left:15px;top:693px;width:367.4px;height:215px;border-radius:9px;overflow:hidden"><svg width="368" height="215" viewBox="15 693 368 215" style="display:block">
<text x="164.4" y="747.4" font-size="9.2" textLength="33" lengthAdjust="spacingAndGlyphs" font-family="Liberation Sans, sans-serif" font-weight="bold" fill="#55627d" stroke="#f4f8fa" stroke-width="1.6" paint-order="stroke" stroke-linejoin="round">Bergen</text>
<text x="142.6" y="827.3" font-size="9.2" textLength="51" lengthAdjust="spacingAndGlyphs" font-family="Liberation Sans, sans-serif" font-weight="bold" fill="#55627d" stroke="#f4f8fa" stroke-width="1.6" paint-order="stroke" stroke-linejoin="round">Haugesund</text>
<text x="346.8" y="843.9" font-size="9.2" textLength="24.4" lengthAdjust="spacingAndGlyphs" font-family="Liberation Sans, sans-serif" font-weight="bold" fill="#55627d" stroke="#f4f8fa" stroke-width="1.6" paint-order="stroke" stroke-linejoin="round">Skien</text>
<text x="167.8" y="862.9" font-size="9.2" textLength="45" lengthAdjust="spacingAndGlyphs" font-family="Liberation Sans, sans-serif" font-weight="bold" fill="#55627d" stroke="#f4f8fa" stroke-width="1.6" paint-order="stroke" stroke-linejoin="round">Stavanger</text>
<path d="M192.3 736.8 A8.8 8.8 0 1 1 205.5 736.8 L198.9 744.2 Z" fill="#4d4d4f"/>
<text transform="translate(198.9 734.3) scale(.5)" font-size="22.4" font-family="Liberation Sans, sans-serif" fill="#fff" stroke="#fff" stroke-width=".5" text-anchor="middle">1</text>
<path d="M209.2 851.6 A8.8 8.8 0 1 1 222.4 851.6 L215.8 859.0 Z" fill="#4d4d4f"/>
<text transform="translate(215.8 849.0999999999999) scale(.5)" font-size="22.4" font-family="Liberation Sans, sans-serif" fill="#fff" stroke="#fff" stroke-width=".5" text-anchor="middle">2</text>
</svg></div>
<span class="t c" style="left:-160.5px;width:400px;text-align:center;top:707.65px;transform:scaleX(0.971);transform-origin:center center;font-size:20px;font-weight:bold;color:#000;font-family:'Liberation Mono',monospace">+</span>
<span class="t c" style="left:-160.5px;width:400px;text-align:center;top:734.65px;transform:scaleX(0.971);transform-origin:center center;font-size:20px;font-weight:bold;color:#000;font-family:'Liberation Mono',monospace">−</span>
<span class="t c" style="left:241px;top:890.85px;transform:scaleX(0.989);transform-origin:left center;font-size:8.6px;color:#777;letter-spacing:-.15px;-webkit-text-stroke:0"><span style="color:#1b7aa8">Leaflet</span> | © <span style="color:#1b7aa8">OpenStreetMap</span>© <span style="color:#1b7aa8">CARTO</span></span>
<span class="t l" style="left:30px;top:935.15px;transform:scaleX(1.011);transform-origin:left center;">Comment</span>
<div class="in cm tx" style="left:30px;top:953px;width:338px;height:45px;font-size:12.6px"><span class="iv" style="transform:scaleX(1.000);transform-origin:left center"></span></div>
<span class="t l" style="left:411px;top:108.55px;transform:scaleX(1.009);transform-origin:left center;">Ballast Port *</span>
<div class="in tx" style="left:411px;top:127px;width:235px;height:29px;font-size:12.6px"><span class="iv" style="transform:scaleX(0.892);transform-origin:left center">BERGEN</span><span class="dd" style="width:20px;height:20px"></span></div>
<span class="t l" style="left:661px;top:108.55px;transform:scaleX(0.985);transform-origin:left center;">Voyage Start Date</span>
<div class="in tx" style="left:661px;top:127px;width:196px;height:29px;font-size:12.6px"><span class="iv" style="transform:scaleX(1.038);transform-origin:left center">01/02/23 12:00</span></div>
<span class="t l" style="left:863.6px;top:108.55px;transform:scaleX(1.012);transform-origin:left center;">Lock</span>
<span class="t l lg" style="left:910px;top:108.55px;transform:scaleX(0.989);transform-origin:left center;">Waiting Days</span>
<div class="in dis tx" style="left:910px;top:127px;width:196px;height:29px;font-size:12.6px"><span class="iv" style="margin-left:auto;transform:scaleX(1.001);transform-origin:right center">0.00</span></div>
<span class="t l" style="left:1113px;top:108.55px;transform:scaleX(1.012);transform-origin:left center;">Lock</span>
<span class="t hd" style="left:408.5px;top:191.4px;transform:scaleX(0.994);transform-origin:left center;">Port Calls</span>
<span class="t c" style="left:1479px;width:400px;text-align:center;top:194.85px;transform:scaleX(0.997);transform-origin:center center;font-size:9.8px;color:#555;-webkit-text-stroke:0">GMT</span>
<span class="t h" style="left:403px;top:229.25px;transform:scaleX(1.030);transform-origin:left center;">Port</span>
<span class="t h" style="left:481.4px;top:229.25px;transform:scaleX(0.939);transform-origin:left center;">Reason for C…</span>
<span class="t h" style="left:559.7px;top:229.25px;transform:scaleX(1.006);transform-origin:left center;">Arrived</span>
<span class="t h" style="left:695.6px;top:229.25px;transform:scaleX(0.996);transform-origin:left center;">Departed</span>
<span class="t h" style="right:1405px;top:229.25px;transform:scaleX(1.014);transform-origin:right center;">Port Cost</span>
<span class="t h" style="left:910px;top:229.25px;transform:scaleX(0.987);transform-origin:left center;">Currency</span>
<span class="t h" style="right:1248.5px;top:229.25px;transform:scaleX(0.944);transform-origin:right center;">HC (USD)</span>
<span class="t h" style="right:1170.4px;top:229.25px;transform:scaleX(1.012);transform-origin:right center;">Distance</span>
<span class="t h" style="right:1092px;top:229.25px;transform:scaleX(0.972);transform-origin:right center;">Speed</span>
<span class="t h" style="left:1223.6px;top:229.25px;transform:scaleX(0.969);transform-origin:left center;">Speed Order</span>
<span class="t h" style="right:936px;top:229.25px;transform:scaleX(0.962);transform-origin:right center;">% Extra At Sea</span>
<span class="t h" style="right:857.3px;top:229.25px;transform:scaleX(0.976);transform-origin:right center;">Extra at Sea</span>
<span class="t h" style="right:779px;top:229.25px;transform:scaleX(0.975);transform-origin:right center;">At Sea</span>
<span class="t h" style="right:700.4px;top:229.25px;transform:scaleX(0.995);transform-origin:right center;">Days L/D</span>
<span class="t h" style="left:1627px;top:229.25px;transform:scaleX(1.002);transform-origin:left center;">L/D Fixed</span>
<span class="t h" style="right:544px;top:229.25px;transform:scaleX(0.998);transform-origin:right center;">Extra in Port</span>
<span class="t h" style="right:465.7px;top:229.25px;transform:scaleX(1.009);transform-origin:right center;">In Port</span>
<span class="t c" style="left:403px;top:257.25px;transform:scaleX(0.892);transform-origin:left center;">BERGEN</span>
<span class="t c g" style="left:481.4px;top:257.25px;transform:scaleX(1.004);transform-origin:left center;">Loading</span>
<span class="t c" style="left:583px;top:257.25px;transform:scaleX(1.038);transform-origin:left center;">01/02/23 12:00</span>
<span class="t c" style="left:719px;top:257.25px;transform:scaleX(1.038);transform-origin:left center;">01/02/23 12:00</span>
<span class="t c" style="right:1405px;top:257.25px;transform:scaleX(1.010);transform-origin:right center;">0</span>
<span class="t c" style="left:910px;top:257.25px;transform:scaleX(0.899);transform-origin:left center;">USD</span>
<span class="t c g" style="right:1248.5px;top:257.25px;transform:scaleX(1.001);transform-origin:right center;">0.00</span>
<span class="t c g" style="right:1170.4px;top:257.25px;transform:scaleX(1.003);transform-origin:right center;">0.00 nm</span>
<span class="t c g" style="right:1092px;top:257.25px;transform:scaleX(0.992);transform-origin:right center;">0.00 kn</span>
<span class="t c" style="left:1223.6px;top:257.25px;transform:scaleX(0.929);transform-origin:left center;">10 kn, 10 M…</span>
<span class="t c g" style="right:936px;top:257.25px;transform:scaleX(0.940);transform-origin:right center;">5.00 %</span>
<span class="t c g" style="right:857.3px;top:257.25px;transform:scaleX(1.001);transform-origin:right center;">0.00</span>
<span class="t c g" style="right:779px;top:257.25px;transform:scaleX(1.001);transform-origin:right center;">0.00</span>
<span class="t c g" style="right:700.4px;top:257.25px;transform:scaleX(1.001);transform-origin:right center;">0.00</span>
<span class="t c" style="right:544px;top:257.25px;transform:scaleX(1.001);transform-origin:right center;">0.00</span>
<span class="t c g" style="right:465.7px;top:257.25px;transform:scaleX(1.001);transform-origin:right center;">0.00</span>
<span class="t c" style="left:403px;top:278.85px;transform:scaleX(0.960);transform-origin:left center;">STAVANGER</span>
<span class="t c g" style="left:481.4px;top:278.85px;transform:scaleX(1.001);transform-origin:left center;">Discharging</span>
<span class="t c" style="left:583px;top:278.85px;transform:scaleX(1.038);transform-origin:left center;">01/02/23 22:50</span>
<span class="t c" style="left:719px;top:278.85px;transform:scaleX(1.038);transform-origin:left center;">01/02/23 22:50</span>
<span class="t c" style="right:1405px;top:278.85px;transform:scaleX(1.010);transform-origin:right center;">0</span>
<span class="t c" style="left:910px;top:278.85px;transform:scaleX(0.899);transform-origin:left center;">USD</span>
<span class="t c g" style="right:1248.5px;top:278.85px;transform:scaleX(1.001);transform-origin:right center;">0.00</span>
<span class="t c g" style="right:1170.4px;top:278.85px;transform:scaleX(1.004);transform-origin:right center;">103.27 nm</span>
<span class="t c g" style="right:1092px;top:278.85px;transform:scaleX(0.992);transform-origin:right center;">9.52 kn</span>
<span class="t c" style="left:1223.6px;top:278.85px;transform:scaleX(0.929);transform-origin:left center;">10 kn, 10 M…</span>
<span class="t c" style="right:936px;top:278.85px;transform:scaleX(0.940);transform-origin:right center;">5.00 %</span>
<span class="t c" style="right:857.3px;top:278.85px;transform:scaleX(1.001);transform-origin:right center;">0.02</span>
<span class="t c g" style="right:779px;top:278.85px;transform:scaleX(1.001);transform-origin:right center;">0.45</span>
<span class="t c g" style="right:700.4px;top:278.85px;transform:scaleX(1.001);transform-origin:right center;">0.00</span>
<span class="t c" style="right:544px;top:278.85px;transform:scaleX(1.001);transform-origin:right center;">0.00</span>
<span class="t c g" style="right:465.7px;top:278.85px;transform:scaleX(1.001);transform-origin:right center;">0.00</span>
<span class="t hd" style="left:408.5px;top:323px;transform:scaleX(0.981);transform-origin:left center;">Cargoes</span>
<span class="t h" style="left:403px;top:360.35px;transform:scaleX(0.986);transform-origin:left center;">Reference</span>
<span class="t h" style="left:490.5px;top:360.35px;transform:scaleX(1.014);transform-origin:left center;">Counterpart</span>
<span class="t h" style="left:577.5px;top:360.35px;transform:scaleX(1.031);transform-origin:left center;">Commodity</span>
<span class="t h" style="right:1563.7px;top:360.35px;transform:scaleX(1.006);transform-origin:right center;">Quantity</span>
<span class="t h" style="left:751.7px;top:360.35px;transform:scaleX(1.003);transform-origin:left center;">UoM</span>
<span class="t h" style="left:838.6px;top:360.35px;transform:scaleX(0.954);transform-origin:left center;">Rule</span>
<span class="t h" style="right:1302.3px;top:360.35px;transform:scaleX(0.987);transform-origin:right center;">Freight Rate</span>
<span class="t h" style="left:1012.8px;top:360.35px;transform:scaleX(0.987);transform-origin:left center;">Currency</span>
<span class="t h" style="right:1128px;top:360.35px;transform:scaleX(0.975);transform-origin:right center;">Exchange Rate</span>
<span class="t h" style="right:1009.5px;top:360.35px;transform:scaleX(1.009);transform-origin:right center;">Freight</span>
<span class="t h" style="left:1297px;top:360.35px;transform:scaleX(0.974);transform-origin:left center;">Freight Amoun…</span>
<span class="t h" style="right:835.5px;top:360.35px;transform:scaleX(1.008);transform-origin:right center;">Stowage</span>
<span class="t h" style="right:748px;top:360.35px;transform:scaleX(0.975);transform-origin:right center;">Broker C.</span>
<span class="t h" style="right:661px;top:360.35px;transform:scaleX(0.990);transform-origin:right center;">Address C.</span>
<span class="t h" style="left:1654px;top:360.35px;transform:scaleX(0.999);transform-origin:left center;">Laydays Commen</span>
<span class="t c g" style="left:403px;top:388.65px;transform:scaleX(1.010);transform-origin:left center;">70743613</span>
<span class="t c" style="left:490.5px;top:388.65px;transform:scaleX(0.946);transform-origin:left center;">Mabl Charter…</span>
<span class="t c" style="left:577.5px;top:388.65px;transform:scaleX(0.962);transform-origin:left center;">Mabl Commo…</span>
<span class="t c" style="right:1563.7px;top:388.65px;transform:scaleX(0.987);transform-origin:right center;">6,000.000</span>
<span class="t c" style="left:751.7px;top:388.65px;transform:scaleX(1.018);transform-origin:left center;">MT</span>
<span class="t c" style="left:838.6px;top:388.65px;transform:scaleX(0.954);transform-origin:left center;">Rate</span>
<span class="t c g" style="right:1302.3px;top:388.65px;transform:scaleX(1.005);transform-origin:right center;">13.3333</span>
<span class="t c" style="left:1012.8px;top:388.65px;transform:scaleX(0.899);transform-origin:left center;">USD</span>
<span class="t c g" style="right:1128px;top:388.65px;transform:scaleX(1.001);transform-origin:right center;">1.00</span>
<span class="t c g" style="right:1009.5px;top:388.65px;transform:scaleX(0.956);transform-origin:right center;">53,333.33 USD</span>
<span class="t c g" style="right:922.5px;top:388.65px;transform:scaleX(0.956);transform-origin:right center;">53,333.33 USD</span>
<span class="t c" style="right:835.5px;top:388.65px;transform:scaleX(1.009);transform-origin:right center;">0.000 CBM/MT</span>
<span class="t c" style="right:748px;top:388.65px;transform:scaleX(0.940);transform-origin:right center;">0.00 %</span>
<span class="t c" style="right:661px;top:388.65px;transform:scaleX(0.940);transform-origin:right center;">0.00 %</span>
<span class="t hd" style="left:408.5px;top:432.7px;transform:scaleX(0.992);transform-origin:left center;">Cargo Ports</span>
<span class="t h" style="left:403px;top:474.25px;transform:scaleX(1.030);transform-origin:left center;">Port</span>
<span class="t h" style="left:499.4px;top:474.25px;transform:scaleX(0.992);transform-origin:left center;">Reason for Call</span>
<span class="t h" style="right:1623px;top:474.25px;transform:scaleX(1.006);transform-origin:right center;">Quantity</span>
<span class="t h" style="left:724.4px;top:474.25px;transform:scaleX(0.987);transform-origin:left center;">Fixed</span>
<span class="t h" style="right:1429.8px;top:474.25px;transform:scaleX(0.987);transform-origin:right center;">Freight Rate</span>
<span class="t h" style="right:1333.5px;top:474.25px;transform:scaleX(0.957);transform-origin:right center;">HC Rate</span>
<span class="t h" style="left:981.7px;top:474.25px;transform:scaleX(0.987);transform-origin:left center;">Currency</span>
<span class="t h" style="right:1138.5px;top:474.25px;transform:scaleX(1.004);transform-origin:right center;">HC Measurement</span>
<span class="t h" style="left:1186px;top:474.25px;transform:scaleX(1.007);transform-origin:left center;">HC Lumpsum</span>
<span class="t h" style="right:948px;top:474.25px;transform:scaleX(0.992);transform-origin:right center;">L/D Rate</span>
<span class="t h" style="left:1367.3px;top:474.25px;transform:scaleX(0.954);transform-origin:left center;">Rule</span>
<span class="t h" style="left:1463px;top:474.25px;transform:scaleX(1.035);transform-origin:left center;">Laytime Term</span>
<span class="t h" style="right:659px;top:474.25px;transform:scaleX(0.999);transform-origin:right center;">Laytime Used</span>
<span class="t h" style="right:562.3px;top:474.25px;transform:scaleX(1.034);transform-origin:right center;">Volume</span>
<span class="t c g" style="left:403px;top:502.05px;transform:scaleX(0.892);transform-origin:left center;">BERGEN</span>
<span class="t c g" style="left:499.4px;top:502.05px;transform:scaleX(1.004);transform-origin:left center;">Loading</span>
<span class="t c" style="right:1623px;top:502.05px;transform:scaleX(0.988);transform-origin:right center;">6,000.00 MT</span>
<span class="t c g" style="right:1429.8px;top:502.05px;transform:scaleX(0.957);transform-origin:right center;">0.0000 USD</span>
<span class="t c" style="right:1333.5px;top:502.05px;transform:scaleX(1.001);transform-origin:right center;">0.00</span>
<span class="t c" style="left:981.7px;top:502.05px;transform:scaleX(0.899);transform-origin:left center;">USD</span>
<span class="t c" style="right:948px;top:502.05px;transform:scaleX(1.001);transform-origin:right center;">0.00</span>
<span class="t c" style="left:1367.3px;top:502.05px;transform:scaleX(1.054);transform-origin:left center;">/day</span>
<span class="t c g" style="right:659px;top:502.05px;transform:scaleX(1.001);transform-origin:right center;">0.00</span>
<span class="t c" style="right:562.3px;top:502.05px;transform:scaleX(0.976);transform-origin:right center;">0.00 CBM</span>
<span class="t c" style="right:465.7px;top:502.05px;transform:scaleX(0.988);transform-origin:right center;">6,000.00 MT</span>
<span class="t c g" style="left:403px;top:523.75px;transform:scaleX(0.960);transform-origin:left center;">STAVANGER</span>
<span class="t c g" style="left:499.4px;top:523.75px;transform:scaleX(1.001);transform-origin:left center;">Discharging</span>
<span class="t c" style="right:1623px;top:523.75px;transform:scaleX(0.988);transform-origin:right center;">6,000.00 MT</span>
<span class="t c" style="right:1429.8px;top:523.75px;transform:scaleX(0.962);transform-origin:right center;">13.3333 USD</span>
<span class="t c" style="right:1333.5px;top:523.75px;transform:scaleX(1.001);transform-origin:right center;">0.00</span>
<span class="t c" style="left:981.7px;top:523.75px;transform:scaleX(0.899);transform-origin:left center;">USD</span>
<span class="t c" style="right:948px;top:523.75px;transform:scaleX(1.001);transform-origin:right center;">0.00</span>
<span class="t c" style="left:1367.3px;top:523.75px;transform:scaleX(1.054);transform-origin:left center;">/day</span>
<span class="t c g" style="right:659px;top:523.75px;transform:scaleX(1.001);transform-origin:right center;">0.00</span>
<span class="t c" style="right:562.3px;top:523.75px;transform:scaleX(0.976);transform-origin:right center;">0.00 CBM</span>
<span class="t c" style="right:465.7px;top:523.75px;transform:scaleX(0.988);transform-origin:right center;">6,000.00 MT</span>
<span class="t hd" style="left:408.5px;top:567.2px;transform:scaleX(1.025);transform-origin:left center;">Various</span>
<span class="t h" style="left:1578.5px;top:571.65px;transform:scaleX(1.001);transform-origin:left center;font-size:10.4px;color:#4c4c4c;-webkit-text-stroke:.38px #4c4c4c">Various Type</span>
<span class="t h" style="left:1686.6px;top:571.65px;transform:scaleX(0.954);transform-origin:left center;font-size:10.4px;color:#4c4c4c;-webkit-text-stroke:.38px #4c4c4c">Type</span>
<span class="t h" style="left:403px;top:605.75px;transform:scaleX(1.014);transform-origin:left center;">From</span>
<span class="t h" style="left:520px;top:605.75px;transform:scaleX(1.009);transform-origin:left center;">Type</span>
<span class="t h" style="left:636.8px;top:605.75px;transform:scaleX(1.075);transform-origin:left center;">Text</span>
<span class="t h" style="left:753.3px;top:605.75px;transform:scaleX(1.023);transform-origin:left center;">Description</span>
<span class="t h" style="right:1328.5px;top:605.75px;transform:scaleX(0.966);transform-origin:right center;">Rate</span>
<span class="t h" style="left:986.6px;top:605.75px;transform:scaleX(0.987);transform-origin:left center;">Currency</span>
<span class="t h" style="left:1103.3px;top:605.75px;transform:scaleX(0.954);transform-origin:left center;">Rule</span>
<span class="t h" style="right:978.4px;top:605.75px;transform:scaleX(1.036);transform-origin:right center;">Amount</span>
<span class="t h" style="right:786.5px;top:605.75px;transform:scaleX(1.006);transform-origin:right center;">Quantity</span>
<span class="t h" style="right:550.6px;top:605.75px;transform:scaleX(1.006);transform-origin:right center;">Amount (Voyage Currency)</span>
<span class="t h" style="left:1788.4px;top:605.75px;transform:scaleX(1.033);transform-origin:left center;">Commission</span>
<span class="t c g" style="left:403px;top:633.15px;transform:scaleX(0.978);transform-origin:left center;">Cargo</span>
<span class="t c g" style="left:520px;top:633.15px;transform:scaleX(1.004);transform-origin:left center;">Cost</span>
<span class="t c" style="left:636.8px;top:633.15px;transform:scaleX(1.010);transform-origin:left center;">Additonal Cost</span>
<span class="t c" style="right:1328.5px;top:633.15px;transform:scaleX(1.005);transform-origin:right center;">0.00000</span>
<span class="t c" style="left:986.6px;top:633.15px;transform:scaleX(0.899);transform-origin:left center;">USD</span>
<span class="t c" style="left:1103.3px;top:633.15px;transform:scaleX(1.018);transform-origin:left center;">Lumpsum</span>
<span class="t c g" style="right:978.4px;top:633.15px;transform:scaleX(1.001);transform-origin:right center;">0.00</span>
<span class="t c g" style="right:786.5px;top:633.15px;transform:scaleX(1.003);transform-origin:right center;">0.000</span>
<span class="t c g" style="right:550.6px;top:633.15px;transform:scaleX(0.944);transform-origin:right center;">0.00 USD</span>
<span class="t c g" style="left:403px;top:654.75px;transform:scaleX(0.989);transform-origin:left center;">Port Call</span>
<span class="t c g" style="left:520px;top:654.75px;transform:scaleX(1.004);transform-origin:left center;">Cost</span>
<span class="t c" style="left:636.8px;top:654.75px;transform:scaleX(1.010);transform-origin:left center;">Additonal Cost</span>
<span class="t c" style="right:1328.5px;top:654.75px;transform:scaleX(1.006);transform-origin:right center;">123.00000</span>
<span class="t c" style="left:986.6px;top:654.75px;transform:scaleX(0.899);transform-origin:left center;">USD</span>
<span class="t c" style="left:1103.3px;top:654.75px;transform:scaleX(0.966);transform-origin:left center;">Per day</span>
<span class="t c g" style="right:978.4px;top:654.75px;transform:scaleX(1.001);transform-origin:right center;">0.00</span>
<span class="t c g" style="right:786.5px;top:654.75px;transform:scaleX(1.003);transform-origin:right center;">0.000</span>
<span class="t c g" style="right:550.6px;top:654.75px;transform:scaleX(0.944);transform-origin:right center;">0.00 USD</span>
<span class="t c g" style="left:403px;top:676.35px;transform:scaleX(0.993);transform-origin:left center;">Voyage</span>
<span class="t c g" style="left:520px;top:676.35px;transform:scaleX(1.004);transform-origin:left center;">Cost</span>
<span class="t c" style="left:636.8px;top:676.35px;transform:scaleX(1.010);transform-origin:left center;">Additonal Cost</span>
<span class="t c" style="right:1328.5px;top:676.35px;transform:scaleX(1.006);transform-origin:right center;">500.00000</span>
<span class="t c" style="left:986.6px;top:676.35px;transform:scaleX(0.899);transform-origin:left center;">USD</span>
<span class="t c" style="left:1103.3px;top:676.35px;transform:scaleX(1.018);transform-origin:left center;">Lumpsum</span>
<span class="t c g" style="right:978.4px;top:676.35px;transform:scaleX(1.004);transform-origin:right center;">500.00</span>
<span class="t c g" style="right:786.5px;top:676.35px;transform:scaleX(1.005);transform-origin:right center;">500.000</span>
<span class="t c g" style="right:550.6px;top:676.35px;transform:scaleX(0.957);transform-origin:right center;">500.00 USD</span>
<span class="t c g" style="left:403px;top:697.95px;transform:scaleX(0.993);transform-origin:left center;">Voyage</span>
<span class="t c g" style="left:520px;top:697.95px;transform:scaleX(0.947);transform-origin:left center;">Revenue</span>
<span class="t c" style="left:636.8px;top:697.95px;transform:scaleX(0.985);transform-origin:left center;">Demurrage</span>
<span class="t c" style="right:1328.5px;top:697.95px;transform:scaleX(0.991);transform-origin:right center;">6,000.00000</span>
<span class="t c" style="left:986.6px;top:697.95px;transform:scaleX(0.899);transform-origin:left center;">USD</span>
<span class="t c" style="left:1103.3px;top:697.95px;transform:scaleX(0.966);transform-origin:left center;">Per day</span>
<span class="t c g" style="right:978.4px;top:697.95px;transform:scaleX(0.984);transform-origin:right center;">2,710.88</span>
<span class="t c g" style="right:786.5px;top:697.95px;transform:scaleX(1.003);transform-origin:right center;">0.452</span>
<span class="t c g" style="right:550.6px;top:697.95px;transform:scaleX(0.951);transform-origin:right center;">2,710.88 USD</span>
<span class="t hd" style="left:1936.8px;top:114.3px;transform:scaleX(0.987);transform-origin:left center;font-size:14.4px;">P&amp;L Summary (USD)</span>
<span class="t pb" style="left:1941px;top:162.35px;transform:scaleX(0.926);transform-origin:left center;">Freight</span>
<span class="t pb" style="right:36.6px;top:162.35px;transform:scaleX(0.994);transform-origin:right center;">53,333</span>
<span class="t p" style="left:1941px;top:183.75px;transform:scaleX(1.026);transform-origin:left center;">Adjustment</span>
<span class="t p" style="right:36.6px;top:183.75px;transform:scaleX(1.010);transform-origin:right center;">0</span>
<span class="t p" style="left:1941px;top:204.65px;transform:scaleX(1.025);transform-origin:left center;">Various</span>
<span class="t p" style="right:36.6px;top:204.65px;transform:scaleX(1.006);transform-origin:right center;">2,711</span>
<span class="t p" style="left:1941px;top:226.25px;transform:scaleX(0.985);transform-origin:left center;">Demurrage</span>
<span class="t p" style="right:36.6px;top:226.25px;transform:scaleX(1.010);transform-origin:right center;">0</span>
<span class="t pb" style="left:1941px;top:247.65px;transform:scaleX(0.919);transform-origin:left center;">Gross Revenue</span>
<span class="t pb" style="right:36.6px;top:247.65px;transform:scaleX(0.994);transform-origin:right center;">56,044</span>
<span class="t p" style="left:1941px;top:272.05px;transform:scaleX(1.020);transform-origin:left center;">Commission</span>
<span class="t p" style="right:36.6px;top:272.05px;transform:scaleX(1.010);transform-origin:right center;">0</span>
<span class="t p" style="left:1941px;top:292.65px;transform:scaleX(0.996);transform-origin:left center;">Despatch</span>
<span class="t p" style="right:36.6px;top:292.65px;transform:scaleX(1.010);transform-origin:right center;">0</span>
<span class="t pb" style="left:1941px;top:315.15px;transform:scaleX(0.937);transform-origin:left center;">Net Revenue</span>
<span class="t pb" style="right:36.6px;top:315.15px;transform:scaleX(0.994);transform-origin:right center;">56,044</span>
<span class="t p" style="left:1941px;top:339.25px;transform:scaleX(1.002);transform-origin:left center;">Port Cost</span>
<span class="t p" style="right:36.6px;top:339.25px;transform:scaleX(1.010);transform-origin:right center;">0</span>
<span class="t p" style="left:1941px;top:360.15px;transform:scaleX(0.979);transform-origin:left center;">Canal Cost</span>
<span class="t p" style="right:36.6px;top:360.15px;transform:scaleX(1.010);transform-origin:right center;">0</span>
<span class="t p" style="left:1941px;top:381.55px;transform:scaleX(0.936);transform-origin:left center;">ILOHC</span>
<span class="t p" style="right:36.6px;top:381.55px;transform:scaleX(1.010);transform-origin:right center;">0</span>
<span class="t p" style="left:1941px;top:402.35px;transform:scaleX(1.000);transform-origin:left center;">Handling Cost</span>
<span class="t p" style="right:36.6px;top:402.35px;transform:scaleX(1.010);transform-origin:right center;">0</span>
<span class="t p" style="left:1941px;top:423.75px;transform:scaleX(1.025);transform-origin:left center;">Various</span>
<span class="t p" style="right:36.6px;top:423.75px;transform:scaleX(1.010);transform-origin:right center;">500</span>
<span class="t p" style="left:1941px;top:444.55px;transform:scaleX(0.994);transform-origin:left center;">Freight Cost</span>
<span class="t p" style="right:36.6px;top:444.55px;transform:scaleX(1.010);transform-origin:right center;">0</span>
<span class="t l lg" style="right:193.6px;top:474.65px;transform:scaleX(0.956);transform-origin:right center;">Price (USD)</span>
<span class="t l" style="right:114.4px;top:474.65px;transform:scaleX(0.987);transform-origin:right center;color:#555">Qty (MT)</span>
<span class="t l" style="right:36px;top:474.65px;transform:scaleX(0.958);transform-origin:right center;color:#555">Cost (USD)</span>
<span class="t p" style="left:1942.6px;top:496.85px;transform:scaleX(0.931);transform-origin:left center;">LS MGO</span>
<div class="in dis sm tx" style="left:2020.4px;top:493.3px;width:91px;height:21.4px;font-size:12.6px"><span class="iv" style="margin-left:auto;transform:scaleX(1.001);transform-origin:right center">0.00</span></div>
<span class="t p" style="right:114.4px;top:496.85px;transform:scaleX(1.003);transform-origin:right center;">4.518</span>
<span class="t p" style="right:36.6px;top:496.85px;transform:scaleX(1.010);transform-origin:right center;">0</span>
<span class="t pb" style="left:1941px;top:525.45px;transform:scaleX(0.921);transform-origin:left center;">Bunker Cost</span>
<span class="t pb" style="right:36.6px;top:525.45px;transform:scaleX(1.022);transform-origin:right center;">0</span>
<span class="t p" style="left:1942.6px;top:563.15px;transform:scaleX(0.892);transform-origin:left center;">EU ETS</span>
<div class="in sm tx" style="left:2020.4px;top:558.4px;width:91px;height:22.2px;font-size:12.6px"><span class="iv" style="margin-left:auto;transform:scaleX(0.944);transform-origin:right center">0.00 <span class="sf">USD</span></span></div>
<span class="t p" style="right:114.4px;top:563.15px;transform:scaleX(1.003);transform-origin:right center;">3.621</span>
<span class="t p" style="right:36.6px;top:563.15px;transform:scaleX(1.010);transform-origin:right center;">0</span>
<span class="t p" style="left:1942.6px;top:593.15px;transform:scaleX(0.925);transform-origin:left center;">Fuel EU</span>
<div class="in sm tx" style="left:2020.4px;top:588.3px;width:91px;height:22.3px;font-size:12.6px"><span class="iv" style="margin-left:auto;transform:scaleX(0.929);transform-origin:right center">0.00 <span class="sf">EUR</span></span></div>
<span class="t p" style="right:114.4px;top:593.15px;transform:scaleX(1.003);transform-origin:right center;">0.000</span>
<span class="t p" style="right:36.6px;top:593.15px;transform:scaleX(1.010);transform-origin:right center;">0</span>
<span class="t l" style="left:1935.7px;width:400px;text-align:center;top:618.55px;transform:scaleX(1.012);transform-origin:center center;">Lock</span>
<span class="t l" style="right:36.6px;top:622.45px;transform:scaleX(0.925);transform-origin:right center;color:#222;font-weight:bold">Contribution</span>
<span class="t pb" style="left:1941px;top:641.85px;transform:scaleX(0.919);transform-origin:left center;">TCE</span>
<div class="in sm tx" style="left:1990.4px;top:637.2px;width:127.2px;height:21.2px;color:#7c8c85"><span class="iv" style="margin-left:auto;transform:scaleX(0.986);transform-origin:right center">122,936</span></div>
<span class="t pb" style="right:36.6px;top:641.85px;transform:scaleX(0.994);transform-origin:right center;">55,544</span>
<span class="t p" style="left:1941px;top:675.85px;transform:scaleX(0.978);transform-origin:left center;">Hire Payable</span>
<span class="t p" style="right:36.6px;top:675.85px;transform:scaleX(1.010);transform-origin:right center;">0</span>
<span class="t p" style="left:1941px;top:697.35px;transform:scaleX(0.997);transform-origin:left center;">Ballast Bonus</span>
<span class="t p" style="right:36.6px;top:697.35px;transform:scaleX(1.010);transform-origin:right center;">0</span>
<span class="t p" style="left:1941px;top:718.15px;transform:scaleX(0.902);transform-origin:left center;">CVE</span>
<span class="t p" style="right:36.6px;top:718.15px;transform:scaleX(1.010);transform-origin:right center;">0</span>
<span class="t l" style="right:36.6px;top:740.75px;transform:scaleX(0.981);transform-origin:right center;color:#4d5f58">Result</span>
<span class="t pb" style="left:1941px;top:763.15px;transform:scaleX(0.948);transform-origin:left center;">Result / Day</span>
<span class="t pb" style="left:2054.8px;top:763.15px;transform:scaleX(0.998);transform-origin:left center;">122,936</span>
<div class="in sm tx" style="left:2168px;top:759.4px;width:99.6px;height:21.6px;color:#7c8c85"><span class="iv" style="margin-left:auto;transform:scaleX(0.982);transform-origin:right center">55,544</span></div>
</div>
<div class="ml">
<div class="b" style="left:1742.3px;top:304.3px;width:164.8px;height:197px;background:#fff;border-radius:4px;box-shadow:0 2px 4px rgba(0,0,0,.22),0 0 2px rgba(0,0,0,.12)"></div>
<svg class="i" style="left:1756.8px;top:375.5px" width="20" height="20" viewBox="0 0 24 24" fill="#666"><path d="M13 3c-4.97 0-9 4.03-9 9H1l3.89 3.89.07.14L9 12H6c0-3.87 3.13-7 7-7s7 3.13 7 7-3.13 7-7 7c-1.93 0-3.68-.79-4.94-2.06l-1.42 1.42C8.27 19.99 10.51 21 13 21c4.97 0 9-4.03 9-9s-4.03-9-9-9zm-1 5v5l4.28 2.54.72-1.21-3.5-2.08V8H12z"/></svg>
<svg class="i" style="left:1756.8px;top:406.2px" width="20" height="20" viewBox="0 0 24 24" fill="#666"><path d="M4 12l1.41 1.41L11 7.83V20h2V7.83l5.58 5.59L20 12l-8-8-8 8z"/></svg>
<svg class="i" style="left:1756.8px;top:436.7px" width="20" height="20" viewBox="0 0 24 24" fill="#666"><path d="M20 12l-1.41-1.41L13 16.17V4h-2v12.17l-5.58-5.59L4 12l8 8 8-8z"/></svg>
<svg class="i" style="left:1756.8px;top:467.8px" width="20" height="20" viewBox="0 0 24 24" fill="#666"><path d="M6 19c0 1.1.9 2 2 2h8c1.1 0 2-.9 2-2V7H6v12zM19 4h-3.5l-1-1h-5l-1 1H5v2h14V4z"/></svg>
</div>
<div class="ov">
<span class="t m" style="left:1757px;top:315.9px;transform:scaleX(0.994);transform-origin:left center;">Create Various Cost</span>
<span class="t m" style="left:1757px;top:345.4px;transform:scaleX(0.975);transform-origin:left center;">Create Various Revenue</span>
<span class="t m" style="left:1789.6px;top:376.4px;transform:scaleX(1.006);transform-origin:left center;">Port Cost History</span>
<span class="t m" style="left:1789.6px;top:407.1px;transform:scaleX(0.992);transform-origin:left center;">Add Before</span>
<span class="t m" style="left:1789.6px;top:437.6px;transform:scaleX(1.026);transform-origin:left center;">Add After</span>
<span class="t m" style="left:1789.6px;top:468.7px;transform:scaleX(0.974);transform-origin:left center;">Delete</span>
</div>
</div>
</body></html>
